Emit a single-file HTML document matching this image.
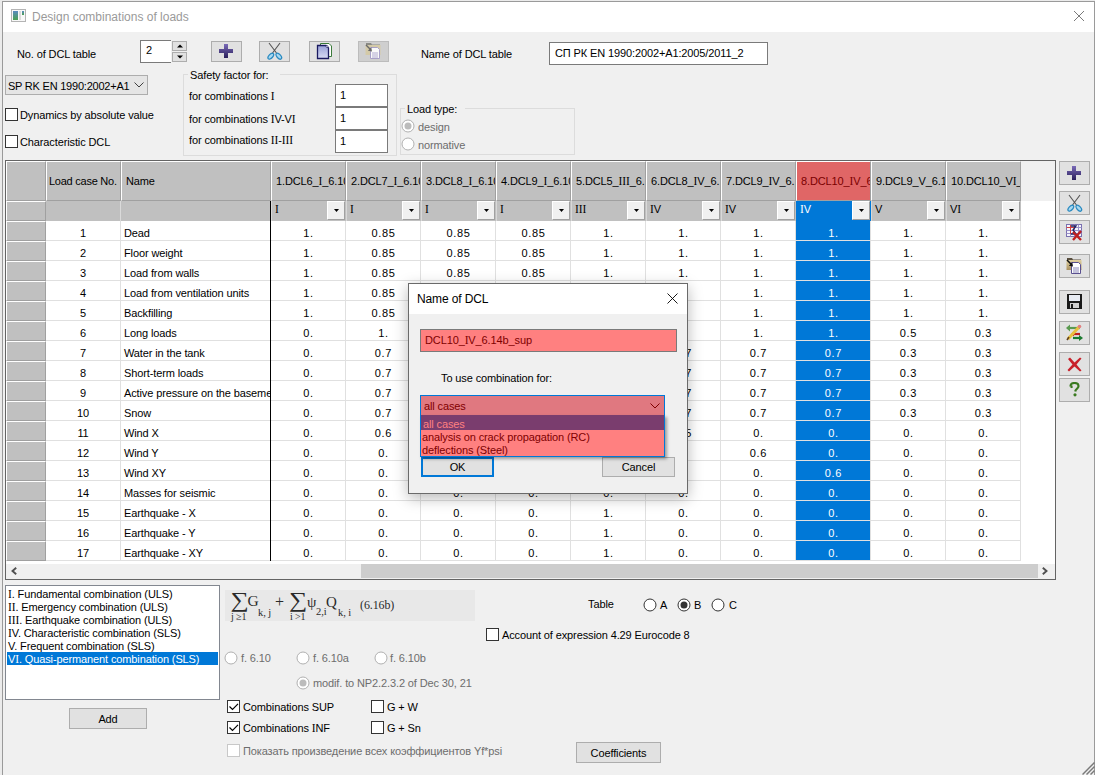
<!DOCTYPE html><html><head><meta charset="utf-8"><style>
*{box-sizing:border-box;margin:0;padding:0}
html,body{width:1095px;height:775px;overflow:hidden;background:#ebebeb;font-family:"Liberation Sans",sans-serif;font-size:11px;color:#000;letter-spacing:-0.12px}
div{position:absolute}
.t{white-space:nowrap}
svg{position:absolute}
</style></head><body>
<div style="left:2px;top:1px;width:1093px;height:774px;background:#f0f0f0;border-left:1px solid #9a9a9a;border-top:1px solid #9a9a9a;border-right:1px solid #9a9a9a"></div><div style="left:3px;top:2px;width:1091px;height:30px;background:#fff"></div><svg style="left:11px;top:9px" width="15" height="13" viewBox="0 0 15 13"><rect x="0.5" y="0.5" width="14" height="12" fill="#f8f8f8" stroke="#b4b4b4"/><defs><linearGradient id="gi" x1="0" y1="0" x2="0" y2="1"><stop offset="0" stop-color="#5a8ac0"/><stop offset="1" stop-color="#4aa050"/></linearGradient></defs><rect x="2" y="2" width="5" height="9" fill="url(#gi)"/><rect x="8" y="2" width="2" height="9" fill="#dcdcdc"/><rect x="11" y="2" width="2" height="4" fill="url(#gi)"/></svg><div class="t" style="left:32px;top:10px;height:14px;line-height:14px;font-size:12px;color:#9a9a9a;letter-spacing:0">Design combinations of loads</div><svg style="left:1073px;top:10px" width="12" height="12" viewBox="0 0 12 12"><path d="M1 1L11 11M11 1L1 11" stroke="#7a7a7a" stroke-width="1"/></svg><div class="t" style="left:17px;top:48px;height:13px;line-height:13px;">No. of DCL table</div><div style="left:140px;top:40px;width:31px;height:23px;background:#fff;border-left:1px solid #7a7a7a;border-top:1px solid #7a7a7a;border-bottom:1px solid #7a7a7a"></div><div class="t" style="left:146px;top:44px;height:13px;line-height:13px;">2</div><div style="left:172px;top:41px;width:15px;height:10px;background:#e1e1e1;border:1px solid #adadad"></div><div style="left:172px;top:52px;width:15px;height:10px;background:#e1e1e1;border:1px solid #adadad"></div><svg style="left:177px;top:44px" width="6" height="4"><path d="M0 3.5L3 0.5L6 3.5Z" fill="#000"/></svg><svg style="left:177px;top:55px" width="6" height="4"><path d="M0 0.5L3 3.5L6 0.5Z" fill="#000"/></svg><div style="left:211px;top:41px;width:31px;height:21px;background:#e1e1e1;border:1px solid #adadad"></div><svg style="left:218px;top:43px" width="16" height="16" viewBox="0 0 16 16"><defs><linearGradient id="pg21843" x1="0" y1="0" x2="0" y2="1"><stop offset="0" stop-color="#7a6ab8"/><stop offset="1" stop-color="#2a1f5a"/></linearGradient></defs><path d="M6 1H10V6H15V10H10V15H6V10H1V6H6Z" fill="url(#pg21843)"/></svg><div style="left:259px;top:41px;width:31px;height:21px;background:#e1e1e1;border:1px solid #adadad"></div><svg style="left:267px;top:42px" width="16" height="18" viewBox="0 0 16 18"><path d="M2 1L9.5 11M13 1L5.5 11" stroke="#555" stroke-width="1.1"/><g transform="rotate(-48 3.8 14.2)"><ellipse cx="3.8" cy="14.2" rx="3.6" ry="1.9" fill="#a8d8f0" stroke="#2a8ac0" stroke-width="1.3"/></g><g transform="rotate(48 11.8 14.2)"><ellipse cx="11.8" cy="14.2" rx="3.6" ry="1.9" fill="#a8d8f0" stroke="#2a8ac0" stroke-width="1.3"/></g></svg><div style="left:309px;top:41px;width:31px;height:21px;background:#e1e1e1;border:1px solid #adadad"></div><svg style="left:316px;top:42px" width="17" height="18" viewBox="0 0 17 18"><defs><linearGradient id="cpg" x1="0" y1="0" x2="0" y2="1"><stop offset="0" stop-color="#98a0d8"/><stop offset="1" stop-color="#d8dcf4"/></linearGradient></defs><path d="M4.5 1.5H13L15.5 4V14.5H4.5Z" fill="#fff" stroke="#3a7a3a"/><path d="M1.5 3.5H10L12.5 6V16.5H1.5Z" fill="url(#cpg)" stroke="#1a1a60" stroke-width="1.3"/><circle cx="11" cy="4.5" r="1" fill="#fff" stroke="#1a1a60" stroke-width="0.6"/></svg><div style="left:358px;top:41px;width:31px;height:21px;background:#cfcfcf;border:1px solid #bcbcbc"></div><svg style="left:365px;top:43px" width="17" height="17" viewBox="0 0 17 17"><path d="M1 0H6L7 1.5H15V2.5H1Z" fill="#8a8a84"/><path d="M0.5 2H15.5V12H0.5Z" fill="#d4caa8"/><path d="M5.5 4.5H12.5L14.5 6.5V15.5H5.5Z" fill="#fafafa" stroke="#a8a0c8"/><path d="M7 10H13M7 12H13M7 14H13" stroke="#b0aad0"/><path d="M1 2L5.5 6.5" stroke="#6a6a6a" stroke-width="1.4"/><path d="M7 8.5L2.8 7.8L6.3 4.3Z" fill="#6a6a6a"/></svg><div class="t" style="left:421px;top:48px;height:13px;line-height:13px;">Name of DCL table</div><div style="left:549px;top:42px;width:219px;height:23px;background:#fff;border:1px solid #7a7a7a"></div><div class="t" style="left:555px;top:47px;height:13px;line-height:13px;">СП РК EN 1990:2002+A1:2005/2011_2</div><div style="left:5px;top:75px;width:143px;height:20px;background:#e5e5e5;border:1px solid #adadad"></div><div class="t" style="left:8px;top:80px;height:13px;line-height:13px;letter-spacing:-0.22px">SP RK EN 1990:2002+A1</div><svg style="left:134px;top:82px" width="10" height="6"><path d="M0.5 0.5L5 5L9.5 0.5" fill="none" stroke="#404040"/></svg><div style="left:5px;top:108px;width:13px;height:13px;background:#fff;border:1px solid #333"></div><div class="t" style="left:20px;top:109px;height:13px;line-height:13px;">Dynamics by absolute value</div><div style="left:5px;top:135px;width:13px;height:13px;background:#fff;border:1px solid #333"></div><div class="t" style="left:20px;top:136px;height:13px;line-height:13px;">Characteristic DCL</div><div style="left:183px;top:74px;width:214px;height:82px;border:1px solid #dcdcdc"></div><div style="left:188px;top:68px;width:92px;height:13px;background:#f0f0f0"></div><div class="t" style="left:190px;top:69px;height:13px;line-height:13px;">Safety factor for:</div><div class="t" style="left:189px;top:90px;height:13px;line-height:13px;">for combinations <span style="font-family:'Liberation Serif';font-size:11.5px">I</span></div><div class="t" style="left:189px;top:113px;height:13px;line-height:13px;">for combinations <span style="font-family:'Liberation Serif';font-size:11.5px">I</span>V-V<span style="font-family:'Liberation Serif';font-size:11.5px">I</span></div><div class="t" style="left:189px;top:134px;height:13px;line-height:13px;">for combinations <span style="font-family:'Liberation Serif';font-size:11.5px">I</span><span style="font-family:'Liberation Serif';font-size:11.5px">I</span>-<span style="font-family:'Liberation Serif';font-size:11.5px">I</span><span style="font-family:'Liberation Serif';font-size:11.5px">I</span><span style="font-family:'Liberation Serif';font-size:11.5px">I</span></div><div style="left:335px;top:84px;width:53px;height:23px;background:#fff;border:1px solid #7a7a7a"></div><div class="t" style="left:340px;top:89px;height:13px;line-height:13px;">1</div><div style="left:335px;top:107px;width:53px;height:23px;background:#fff;border:1px solid #7a7a7a"></div><div class="t" style="left:340px;top:112px;height:13px;line-height:13px;">1</div><div style="left:335px;top:130px;width:53px;height:23px;background:#fff;border:1px solid #7a7a7a"></div><div class="t" style="left:340px;top:135px;height:13px;line-height:13px;">1</div><div style="left:400px;top:108px;width:175px;height:47px;border:1px solid #dcdcdc"></div><div style="left:405px;top:101px;width:60px;height:13px;background:#f0f0f0"></div><div class="t" style="left:407px;top:103px;height:13px;line-height:13px;">Load type:</div><svg style="left:401px;top:119px" width="15" height="15"><circle cx="7" cy="7" r="6" fill="#fff" stroke="#b0b0b0"/><circle cx="7" cy="7" r="3.5" fill="#bcbcbc"/></svg><div class="t" style="left:418px;top:121px;height:13px;line-height:13px;color:#6d6d6d">design</div><svg style="left:401px;top:137px" width="15" height="15"><circle cx="7" cy="7" r="6" fill="#fff" stroke="#b0b0b0"/></svg><div class="t" style="left:418px;top:139px;height:13px;line-height:13px;color:#6d6d6d">normative</div><div style="left:5px;top:160px;width:1051px;height:420px;background:#fff;border:1px solid #646464"></div><div style="left:6px;top:161px;width:1049px;height:40px;background:#f0f0f0"></div><div style="left:6px;top:161px;width:40px;height:40px;background:#c0c0c0;border-top:1px solid #fff;border-left:1px solid #fff;border-bottom:1px solid #a0a0a0;border-right:1px solid #a0a0a0;overflow:hidden"></div><div style="left:46px;top:161px;width:75px;height:40px;background:#c0c0c0;border-top:1px solid #fff;border-left:1px solid #fff;border-bottom:1px solid #a0a0a0;border-right:1px solid #a0a0a0;overflow:hidden"><div class="t" style="left:4px;top:13px;line-height:13px;letter-spacing:-0.25px;left:2px">Load case No.</div></div><div style="left:121px;top:161px;width:150px;height:40px;background:#c0c0c0;border-top:1px solid #fff;border-left:1px solid #fff;border-bottom:1px solid #a0a0a0;border-right:1px solid #a0a0a0;overflow:hidden"><div class="t" style="left:4px;top:13px;line-height:13px;">Name</div></div><div style="left:271px;top:161px;width:75px;height:40px;background:#c0c0c0;border-top:1px solid #fff;border-left:1px solid #fff;border-bottom:1px solid #a0a0a0;border-right:1px solid #a0a0a0;overflow:hidden"><div class="t" style="left:4px;top:13px;line-height:13px;">1.DCL6_<span style="font-family:'Liberation Serif';font-size:11.5px">I</span>_6.10</div></div><div style="left:346px;top:161px;width:75px;height:40px;background:#c0c0c0;border-top:1px solid #fff;border-left:1px solid #fff;border-bottom:1px solid #a0a0a0;border-right:1px solid #a0a0a0;overflow:hidden"><div class="t" style="left:4px;top:13px;line-height:13px;">2.DCL7_<span style="font-family:'Liberation Serif';font-size:11.5px">I</span>_6.10</div></div><div style="left:421px;top:161px;width:75px;height:40px;background:#c0c0c0;border-top:1px solid #fff;border-left:1px solid #fff;border-bottom:1px solid #a0a0a0;border-right:1px solid #a0a0a0;overflow:hidden"><div class="t" style="left:4px;top:13px;line-height:13px;">3.DCL8_<span style="font-family:'Liberation Serif';font-size:11.5px">I</span>_6.10</div></div><div style="left:496px;top:161px;width:75px;height:40px;background:#c0c0c0;border-top:1px solid #fff;border-left:1px solid #fff;border-bottom:1px solid #a0a0a0;border-right:1px solid #a0a0a0;overflow:hidden"><div class="t" style="left:4px;top:13px;line-height:13px;">4.DCL9_<span style="font-family:'Liberation Serif';font-size:11.5px">I</span>_6.10</div></div><div style="left:571px;top:161px;width:75px;height:40px;background:#c0c0c0;border-top:1px solid #fff;border-left:1px solid #fff;border-bottom:1px solid #a0a0a0;border-right:1px solid #a0a0a0;overflow:hidden"><div class="t" style="left:4px;top:13px;line-height:13px;">5.DCL5_<span style="font-family:'Liberation Serif';font-size:11.5px">I</span><span style="font-family:'Liberation Serif';font-size:11.5px">I</span><span style="font-family:'Liberation Serif';font-size:11.5px">I</span>_6.10</div></div><div style="left:646px;top:161px;width:75px;height:40px;background:#c0c0c0;border-top:1px solid #fff;border-left:1px solid #fff;border-bottom:1px solid #a0a0a0;border-right:1px solid #a0a0a0;overflow:hidden"><div class="t" style="left:4px;top:13px;line-height:13px;">6.DCL8_<span style="font-family:'Liberation Serif';font-size:11.5px">I</span>V_6.10</div></div><div style="left:721px;top:161px;width:75px;height:40px;background:#c0c0c0;border-top:1px solid #fff;border-left:1px solid #fff;border-bottom:1px solid #a0a0a0;border-right:1px solid #a0a0a0;overflow:hidden"><div class="t" style="left:4px;top:13px;line-height:13px;">7.DCL9_<span style="font-family:'Liberation Serif';font-size:11.5px">I</span>V_6.10</div></div><div style="left:796px;top:161px;width:75px;height:40px;background:#e06666;border-top:1px solid #fff;border-left:1px solid #fff;border-bottom:1px solid #a0a0a0;border-right:1px solid #a0a0a0;overflow:hidden"><div class="t" style="left:4px;top:13px;line-height:13px;color:#7a0000">8.DCL10_<span style="font-family:'Liberation Serif';font-size:11.5px">I</span>V_6.10</div></div><div style="left:871px;top:161px;width:75px;height:40px;background:#c0c0c0;border-top:1px solid #fff;border-left:1px solid #fff;border-bottom:1px solid #a0a0a0;border-right:1px solid #a0a0a0;overflow:hidden"><div class="t" style="left:4px;top:13px;line-height:13px;">9.DCL9_V_6.10</div></div><div style="left:946px;top:161px;width:75px;height:40px;background:#c0c0c0;border-top:1px solid #fff;border-left:1px solid #fff;border-bottom:1px solid #a0a0a0;border-right:1px solid #a0a0a0;overflow:hidden"><div class="t" style="left:4px;top:13px;line-height:13px;">10.DCL10_V<span style="font-family:'Liberation Serif';font-size:11.5px">I</span>_6.10</div></div><div style="left:6px;top:201px;width:1049px;height:20px;background:#fff"></div><div style="left:6px;top:201px;width:40px;height:20px;background:#c0c0c0;border-top:1px solid #fff;border-left:1px solid #fff;border-bottom:1px solid #a0a0a0;border-right:1px solid #a0a0a0;overflow:hidden"></div><div style="left:46px;top:201px;width:225px;height:20px;background:#c0c0c0"></div><div style="left:120px;top:201px;width:1px;height:20px;background:#dadada"></div><div style="left:271px;top:201px;width:75px;height:20px;background:#c0c0c0;border-left:1px solid #d8d8d8"></div><div class="t" style="left:275px;top:203px;height:13px;line-height:13px;color:#000"><span style="font-family:'Liberation Serif';font-size:11.5px">I</span></div><div style="left:327px;top:201px;width:18px;height:19px;background:#f0f0f0;border-left:1px solid #fff;border-top:1px solid #fff;border-right:1px solid #a0a0a0;border-bottom:1px solid #a0a0a0"></div><svg style="left:334px;top:209px" width="5" height="3"><path d="M0 0H5L2.5 3Z" fill="#000"/></svg><div style="left:346px;top:201px;width:75px;height:20px;background:#c0c0c0;border-left:1px solid #d8d8d8"></div><div class="t" style="left:350px;top:203px;height:13px;line-height:13px;color:#000"><span style="font-family:'Liberation Serif';font-size:11.5px">I</span></div><div style="left:402px;top:201px;width:18px;height:19px;background:#f0f0f0;border-left:1px solid #fff;border-top:1px solid #fff;border-right:1px solid #a0a0a0;border-bottom:1px solid #a0a0a0"></div><svg style="left:409px;top:209px" width="5" height="3"><path d="M0 0H5L2.5 3Z" fill="#000"/></svg><div style="left:421px;top:201px;width:75px;height:20px;background:#c0c0c0;border-left:1px solid #d8d8d8"></div><div class="t" style="left:425px;top:203px;height:13px;line-height:13px;color:#000"><span style="font-family:'Liberation Serif';font-size:11.5px">I</span></div><div style="left:477px;top:201px;width:18px;height:19px;background:#f0f0f0;border-left:1px solid #fff;border-top:1px solid #fff;border-right:1px solid #a0a0a0;border-bottom:1px solid #a0a0a0"></div><svg style="left:484px;top:209px" width="5" height="3"><path d="M0 0H5L2.5 3Z" fill="#000"/></svg><div style="left:496px;top:201px;width:75px;height:20px;background:#c0c0c0;border-left:1px solid #d8d8d8"></div><div class="t" style="left:500px;top:203px;height:13px;line-height:13px;color:#000"><span style="font-family:'Liberation Serif';font-size:11.5px">I</span></div><div style="left:552px;top:201px;width:18px;height:19px;background:#f0f0f0;border-left:1px solid #fff;border-top:1px solid #fff;border-right:1px solid #a0a0a0;border-bottom:1px solid #a0a0a0"></div><svg style="left:559px;top:209px" width="5" height="3"><path d="M0 0H5L2.5 3Z" fill="#000"/></svg><div style="left:571px;top:201px;width:75px;height:20px;background:#c0c0c0;border-left:1px solid #d8d8d8"></div><div class="t" style="left:575px;top:203px;height:13px;line-height:13px;color:#000"><span style="font-family:'Liberation Serif';font-size:11.5px">I</span><span style="font-family:'Liberation Serif';font-size:11.5px">I</span><span style="font-family:'Liberation Serif';font-size:11.5px">I</span></div><div style="left:627px;top:201px;width:18px;height:19px;background:#f0f0f0;border-left:1px solid #fff;border-top:1px solid #fff;border-right:1px solid #a0a0a0;border-bottom:1px solid #a0a0a0"></div><svg style="left:634px;top:209px" width="5" height="3"><path d="M0 0H5L2.5 3Z" fill="#000"/></svg><div style="left:646px;top:201px;width:75px;height:20px;background:#c0c0c0;border-left:1px solid #d8d8d8"></div><div class="t" style="left:650px;top:203px;height:13px;line-height:13px;color:#000"><span style="font-family:'Liberation Serif';font-size:11.5px">I</span>V</div><div style="left:702px;top:201px;width:18px;height:19px;background:#f0f0f0;border-left:1px solid #fff;border-top:1px solid #fff;border-right:1px solid #a0a0a0;border-bottom:1px solid #a0a0a0"></div><svg style="left:709px;top:209px" width="5" height="3"><path d="M0 0H5L2.5 3Z" fill="#000"/></svg><div style="left:721px;top:201px;width:75px;height:20px;background:#c0c0c0;border-left:1px solid #d8d8d8"></div><div class="t" style="left:725px;top:203px;height:13px;line-height:13px;color:#000"><span style="font-family:'Liberation Serif';font-size:11.5px">I</span>V</div><div style="left:777px;top:201px;width:18px;height:19px;background:#f0f0f0;border-left:1px solid #fff;border-top:1px solid #fff;border-right:1px solid #a0a0a0;border-bottom:1px solid #a0a0a0"></div><svg style="left:784px;top:209px" width="5" height="3"><path d="M0 0H5L2.5 3Z" fill="#000"/></svg><div style="left:796px;top:201px;width:75px;height:20px;background:#0078d7;border-left:1px solid #0078d7"></div><div class="t" style="left:800px;top:203px;height:13px;line-height:13px;color:#fff"><span style="font-family:'Liberation Serif';font-size:11.5px">I</span>V</div><div style="left:852px;top:201px;width:18px;height:19px;background:#f0f0f0;border-left:1px solid #fff;border-top:1px solid #fff;border-right:1px solid #a0a0a0;border-bottom:1px solid #a0a0a0"></div><svg style="left:859px;top:209px" width="5" height="3"><path d="M0 0H5L2.5 3Z" fill="#000"/></svg><div style="left:871px;top:201px;width:75px;height:20px;background:#c0c0c0;border-left:1px solid #d8d8d8"></div><div class="t" style="left:875px;top:203px;height:13px;line-height:13px;color:#000">V</div><div style="left:927px;top:201px;width:18px;height:19px;background:#f0f0f0;border-left:1px solid #fff;border-top:1px solid #fff;border-right:1px solid #a0a0a0;border-bottom:1px solid #a0a0a0"></div><svg style="left:934px;top:209px" width="5" height="3"><path d="M0 0H5L2.5 3Z" fill="#000"/></svg><div style="left:946px;top:201px;width:75px;height:20px;background:#c0c0c0;border-left:1px solid #d8d8d8"></div><div class="t" style="left:950px;top:203px;height:13px;line-height:13px;color:#000">V<span style="font-family:'Liberation Serif';font-size:11.5px">I</span></div><div style="left:1002px;top:201px;width:18px;height:19px;background:#f0f0f0;border-left:1px solid #fff;border-top:1px solid #fff;border-right:1px solid #a0a0a0;border-bottom:1px solid #a0a0a0"></div><svg style="left:1009px;top:209px" width="5" height="3"><path d="M0 0H5L2.5 3Z" fill="#000"/></svg><div style="left:6px;top:221px;width:40px;height:20px;background:#c0c0c0;border-top:1px solid #fff;border-left:1px solid #fff;border-bottom:1px solid #a0a0a0;border-right:1px solid #a0a0a0;overflow:hidden"></div><div style="left:46px;top:221px;width:75px;height:20px;border-bottom:1px solid #e0e0e0;border-right:1px solid #e0e0e0"></div><div class="t" style="left:46px;top:227px;width:74px;text-align:center;line-height:13px">1</div><div style="left:121px;top:221px;width:150px;height:20px;border-bottom:1px solid #e0e0e0;overflow:hidden"><div class="t" style="left:3px;top:6px;line-height:13px">Dead</div></div><div style="left:271px;top:221px;width:75px;height:20px;border-bottom:1px solid #e0e0e0;border-right:1px solid #e0e0e0"></div><div class="t" style="left:271px;top:227px;width:74px;text-align:center;line-height:13px;letter-spacing:0.7px;padding-left:1px;color:#000">1.</div><div style="left:346px;top:221px;width:75px;height:20px;border-bottom:1px solid #e0e0e0;border-right:1px solid #e0e0e0"></div><div class="t" style="left:346px;top:227px;width:74px;text-align:center;line-height:13px;letter-spacing:0.7px;padding-left:1px;color:#000">0.85</div><div style="left:421px;top:221px;width:75px;height:20px;border-bottom:1px solid #e0e0e0;border-right:1px solid #e0e0e0"></div><div class="t" style="left:421px;top:227px;width:74px;text-align:center;line-height:13px;letter-spacing:0.7px;padding-left:1px;color:#000">0.85</div><div style="left:496px;top:221px;width:75px;height:20px;border-bottom:1px solid #e0e0e0;border-right:1px solid #e0e0e0"></div><div class="t" style="left:496px;top:227px;width:74px;text-align:center;line-height:13px;letter-spacing:0.7px;padding-left:1px;color:#000">0.85</div><div style="left:571px;top:221px;width:75px;height:20px;border-bottom:1px solid #e0e0e0;border-right:1px solid #e0e0e0"></div><div class="t" style="left:571px;top:227px;width:74px;text-align:center;line-height:13px;letter-spacing:0.7px;padding-left:1px;color:#000">1.</div><div style="left:646px;top:221px;width:75px;height:20px;border-bottom:1px solid #e0e0e0;border-right:1px solid #e0e0e0"></div><div class="t" style="left:646px;top:227px;width:74px;text-align:center;line-height:13px;letter-spacing:0.7px;padding-left:1px;color:#000">1.</div><div style="left:721px;top:221px;width:75px;height:20px;border-bottom:1px solid #e0e0e0;border-right:1px solid #e0e0e0"></div><div class="t" style="left:721px;top:227px;width:74px;text-align:center;line-height:13px;letter-spacing:0.7px;padding-left:1px;color:#000">1.</div><div style="left:796px;top:221px;width:75px;height:20px;background:#0078d7;border-bottom:1px solid #e0e0e0;border-right:1px solid #e0e0e0"></div><div class="t" style="left:796px;top:227px;width:74px;text-align:center;line-height:13px;letter-spacing:0.7px;padding-left:1px;color:#fff">1.</div><div style="left:871px;top:221px;width:75px;height:20px;border-bottom:1px solid #e0e0e0;border-right:1px solid #e0e0e0"></div><div class="t" style="left:871px;top:227px;width:74px;text-align:center;line-height:13px;letter-spacing:0.7px;padding-left:1px;color:#000">1.</div><div style="left:946px;top:221px;width:75px;height:20px;border-bottom:1px solid #e0e0e0;border-right:1px solid #e0e0e0"></div><div class="t" style="left:946px;top:227px;width:74px;text-align:center;line-height:13px;letter-spacing:0.7px;padding-left:1px;color:#000">1.</div><div style="left:6px;top:241px;width:40px;height:20px;background:#c0c0c0;border-top:1px solid #fff;border-left:1px solid #fff;border-bottom:1px solid #a0a0a0;border-right:1px solid #a0a0a0;overflow:hidden"></div><div style="left:46px;top:241px;width:75px;height:20px;border-bottom:1px solid #e0e0e0;border-right:1px solid #e0e0e0"></div><div class="t" style="left:46px;top:247px;width:74px;text-align:center;line-height:13px">2</div><div style="left:121px;top:241px;width:150px;height:20px;border-bottom:1px solid #e0e0e0;overflow:hidden"><div class="t" style="left:3px;top:6px;line-height:13px">Floor weight</div></div><div style="left:271px;top:241px;width:75px;height:20px;border-bottom:1px solid #e0e0e0;border-right:1px solid #e0e0e0"></div><div class="t" style="left:271px;top:247px;width:74px;text-align:center;line-height:13px;letter-spacing:0.7px;padding-left:1px;color:#000">1.</div><div style="left:346px;top:241px;width:75px;height:20px;border-bottom:1px solid #e0e0e0;border-right:1px solid #e0e0e0"></div><div class="t" style="left:346px;top:247px;width:74px;text-align:center;line-height:13px;letter-spacing:0.7px;padding-left:1px;color:#000">0.85</div><div style="left:421px;top:241px;width:75px;height:20px;border-bottom:1px solid #e0e0e0;border-right:1px solid #e0e0e0"></div><div class="t" style="left:421px;top:247px;width:74px;text-align:center;line-height:13px;letter-spacing:0.7px;padding-left:1px;color:#000">0.85</div><div style="left:496px;top:241px;width:75px;height:20px;border-bottom:1px solid #e0e0e0;border-right:1px solid #e0e0e0"></div><div class="t" style="left:496px;top:247px;width:74px;text-align:center;line-height:13px;letter-spacing:0.7px;padding-left:1px;color:#000">0.85</div><div style="left:571px;top:241px;width:75px;height:20px;border-bottom:1px solid #e0e0e0;border-right:1px solid #e0e0e0"></div><div class="t" style="left:571px;top:247px;width:74px;text-align:center;line-height:13px;letter-spacing:0.7px;padding-left:1px;color:#000">1.</div><div style="left:646px;top:241px;width:75px;height:20px;border-bottom:1px solid #e0e0e0;border-right:1px solid #e0e0e0"></div><div class="t" style="left:646px;top:247px;width:74px;text-align:center;line-height:13px;letter-spacing:0.7px;padding-left:1px;color:#000">1.</div><div style="left:721px;top:241px;width:75px;height:20px;border-bottom:1px solid #e0e0e0;border-right:1px solid #e0e0e0"></div><div class="t" style="left:721px;top:247px;width:74px;text-align:center;line-height:13px;letter-spacing:0.7px;padding-left:1px;color:#000">1.</div><div style="left:796px;top:241px;width:75px;height:20px;background:#0078d7;border-bottom:1px solid #e0e0e0;border-right:1px solid #e0e0e0"></div><div class="t" style="left:796px;top:247px;width:74px;text-align:center;line-height:13px;letter-spacing:0.7px;padding-left:1px;color:#fff">1.</div><div style="left:871px;top:241px;width:75px;height:20px;border-bottom:1px solid #e0e0e0;border-right:1px solid #e0e0e0"></div><div class="t" style="left:871px;top:247px;width:74px;text-align:center;line-height:13px;letter-spacing:0.7px;padding-left:1px;color:#000">1.</div><div style="left:946px;top:241px;width:75px;height:20px;border-bottom:1px solid #e0e0e0;border-right:1px solid #e0e0e0"></div><div class="t" style="left:946px;top:247px;width:74px;text-align:center;line-height:13px;letter-spacing:0.7px;padding-left:1px;color:#000">1.</div><div style="left:6px;top:261px;width:40px;height:20px;background:#c0c0c0;border-top:1px solid #fff;border-left:1px solid #fff;border-bottom:1px solid #a0a0a0;border-right:1px solid #a0a0a0;overflow:hidden"></div><div style="left:46px;top:261px;width:75px;height:20px;border-bottom:1px solid #e0e0e0;border-right:1px solid #e0e0e0"></div><div class="t" style="left:46px;top:267px;width:74px;text-align:center;line-height:13px">3</div><div style="left:121px;top:261px;width:150px;height:20px;border-bottom:1px solid #e0e0e0;overflow:hidden"><div class="t" style="left:3px;top:6px;line-height:13px">Load from walls</div></div><div style="left:271px;top:261px;width:75px;height:20px;border-bottom:1px solid #e0e0e0;border-right:1px solid #e0e0e0"></div><div class="t" style="left:271px;top:267px;width:74px;text-align:center;line-height:13px;letter-spacing:0.7px;padding-left:1px;color:#000">1.</div><div style="left:346px;top:261px;width:75px;height:20px;border-bottom:1px solid #e0e0e0;border-right:1px solid #e0e0e0"></div><div class="t" style="left:346px;top:267px;width:74px;text-align:center;line-height:13px;letter-spacing:0.7px;padding-left:1px;color:#000">0.85</div><div style="left:421px;top:261px;width:75px;height:20px;border-bottom:1px solid #e0e0e0;border-right:1px solid #e0e0e0"></div><div class="t" style="left:421px;top:267px;width:74px;text-align:center;line-height:13px;letter-spacing:0.7px;padding-left:1px;color:#000">0.85</div><div style="left:496px;top:261px;width:75px;height:20px;border-bottom:1px solid #e0e0e0;border-right:1px solid #e0e0e0"></div><div class="t" style="left:496px;top:267px;width:74px;text-align:center;line-height:13px;letter-spacing:0.7px;padding-left:1px;color:#000">0.85</div><div style="left:571px;top:261px;width:75px;height:20px;border-bottom:1px solid #e0e0e0;border-right:1px solid #e0e0e0"></div><div class="t" style="left:571px;top:267px;width:74px;text-align:center;line-height:13px;letter-spacing:0.7px;padding-left:1px;color:#000">1.</div><div style="left:646px;top:261px;width:75px;height:20px;border-bottom:1px solid #e0e0e0;border-right:1px solid #e0e0e0"></div><div class="t" style="left:646px;top:267px;width:74px;text-align:center;line-height:13px;letter-spacing:0.7px;padding-left:1px;color:#000">1.</div><div style="left:721px;top:261px;width:75px;height:20px;border-bottom:1px solid #e0e0e0;border-right:1px solid #e0e0e0"></div><div class="t" style="left:721px;top:267px;width:74px;text-align:center;line-height:13px;letter-spacing:0.7px;padding-left:1px;color:#000">1.</div><div style="left:796px;top:261px;width:75px;height:20px;background:#0078d7;border-bottom:1px solid #e0e0e0;border-right:1px solid #e0e0e0"></div><div class="t" style="left:796px;top:267px;width:74px;text-align:center;line-height:13px;letter-spacing:0.7px;padding-left:1px;color:#fff">1.</div><div style="left:871px;top:261px;width:75px;height:20px;border-bottom:1px solid #e0e0e0;border-right:1px solid #e0e0e0"></div><div class="t" style="left:871px;top:267px;width:74px;text-align:center;line-height:13px;letter-spacing:0.7px;padding-left:1px;color:#000">1.</div><div style="left:946px;top:261px;width:75px;height:20px;border-bottom:1px solid #e0e0e0;border-right:1px solid #e0e0e0"></div><div class="t" style="left:946px;top:267px;width:74px;text-align:center;line-height:13px;letter-spacing:0.7px;padding-left:1px;color:#000">1.</div><div style="left:6px;top:281px;width:40px;height:20px;background:#c0c0c0;border-top:1px solid #fff;border-left:1px solid #fff;border-bottom:1px solid #a0a0a0;border-right:1px solid #a0a0a0;overflow:hidden"></div><div style="left:46px;top:281px;width:75px;height:20px;border-bottom:1px solid #e0e0e0;border-right:1px solid #e0e0e0"></div><div class="t" style="left:46px;top:287px;width:74px;text-align:center;line-height:13px">4</div><div style="left:121px;top:281px;width:150px;height:20px;border-bottom:1px solid #e0e0e0;overflow:hidden"><div class="t" style="left:3px;top:6px;line-height:13px">Load from ventilation units</div></div><div style="left:271px;top:281px;width:75px;height:20px;border-bottom:1px solid #e0e0e0;border-right:1px solid #e0e0e0"></div><div class="t" style="left:271px;top:287px;width:74px;text-align:center;line-height:13px;letter-spacing:0.7px;padding-left:1px;color:#000">1.</div><div style="left:346px;top:281px;width:75px;height:20px;border-bottom:1px solid #e0e0e0;border-right:1px solid #e0e0e0"></div><div class="t" style="left:346px;top:287px;width:74px;text-align:center;line-height:13px;letter-spacing:0.7px;padding-left:1px;color:#000">0.85</div><div style="left:421px;top:281px;width:75px;height:20px;border-bottom:1px solid #e0e0e0;border-right:1px solid #e0e0e0"></div><div class="t" style="left:421px;top:287px;width:74px;text-align:center;line-height:13px;letter-spacing:0.7px;padding-left:1px;color:#000">0.85</div><div style="left:496px;top:281px;width:75px;height:20px;border-bottom:1px solid #e0e0e0;border-right:1px solid #e0e0e0"></div><div class="t" style="left:496px;top:287px;width:74px;text-align:center;line-height:13px;letter-spacing:0.7px;padding-left:1px;color:#000">0.85</div><div style="left:571px;top:281px;width:75px;height:20px;border-bottom:1px solid #e0e0e0;border-right:1px solid #e0e0e0"></div><div class="t" style="left:571px;top:287px;width:74px;text-align:center;line-height:13px;letter-spacing:0.7px;padding-left:1px;color:#000">1.</div><div style="left:646px;top:281px;width:75px;height:20px;border-bottom:1px solid #e0e0e0;border-right:1px solid #e0e0e0"></div><div class="t" style="left:646px;top:287px;width:74px;text-align:center;line-height:13px;letter-spacing:0.7px;padding-left:1px;color:#000">1.</div><div style="left:721px;top:281px;width:75px;height:20px;border-bottom:1px solid #e0e0e0;border-right:1px solid #e0e0e0"></div><div class="t" style="left:721px;top:287px;width:74px;text-align:center;line-height:13px;letter-spacing:0.7px;padding-left:1px;color:#000">1.</div><div style="left:796px;top:281px;width:75px;height:20px;background:#0078d7;border-bottom:1px solid #e0e0e0;border-right:1px solid #e0e0e0"></div><div class="t" style="left:796px;top:287px;width:74px;text-align:center;line-height:13px;letter-spacing:0.7px;padding-left:1px;color:#fff">1.</div><div style="left:871px;top:281px;width:75px;height:20px;border-bottom:1px solid #e0e0e0;border-right:1px solid #e0e0e0"></div><div class="t" style="left:871px;top:287px;width:74px;text-align:center;line-height:13px;letter-spacing:0.7px;padding-left:1px;color:#000">1.</div><div style="left:946px;top:281px;width:75px;height:20px;border-bottom:1px solid #e0e0e0;border-right:1px solid #e0e0e0"></div><div class="t" style="left:946px;top:287px;width:74px;text-align:center;line-height:13px;letter-spacing:0.7px;padding-left:1px;color:#000">1.</div><div style="left:6px;top:301px;width:40px;height:20px;background:#c0c0c0;border-top:1px solid #fff;border-left:1px solid #fff;border-bottom:1px solid #a0a0a0;border-right:1px solid #a0a0a0;overflow:hidden"></div><div style="left:46px;top:301px;width:75px;height:20px;border-bottom:1px solid #e0e0e0;border-right:1px solid #e0e0e0"></div><div class="t" style="left:46px;top:307px;width:74px;text-align:center;line-height:13px">5</div><div style="left:121px;top:301px;width:150px;height:20px;border-bottom:1px solid #e0e0e0;overflow:hidden"><div class="t" style="left:3px;top:6px;line-height:13px">Backfilling</div></div><div style="left:271px;top:301px;width:75px;height:20px;border-bottom:1px solid #e0e0e0;border-right:1px solid #e0e0e0"></div><div class="t" style="left:271px;top:307px;width:74px;text-align:center;line-height:13px;letter-spacing:0.7px;padding-left:1px;color:#000">1.</div><div style="left:346px;top:301px;width:75px;height:20px;border-bottom:1px solid #e0e0e0;border-right:1px solid #e0e0e0"></div><div class="t" style="left:346px;top:307px;width:74px;text-align:center;line-height:13px;letter-spacing:0.7px;padding-left:1px;color:#000">0.85</div><div style="left:421px;top:301px;width:75px;height:20px;border-bottom:1px solid #e0e0e0;border-right:1px solid #e0e0e0"></div><div class="t" style="left:421px;top:307px;width:74px;text-align:center;line-height:13px;letter-spacing:0.7px;padding-left:1px;color:#000">0.85</div><div style="left:496px;top:301px;width:75px;height:20px;border-bottom:1px solid #e0e0e0;border-right:1px solid #e0e0e0"></div><div class="t" style="left:496px;top:307px;width:74px;text-align:center;line-height:13px;letter-spacing:0.7px;padding-left:1px;color:#000">0.85</div><div style="left:571px;top:301px;width:75px;height:20px;border-bottom:1px solid #e0e0e0;border-right:1px solid #e0e0e0"></div><div class="t" style="left:571px;top:307px;width:74px;text-align:center;line-height:13px;letter-spacing:0.7px;padding-left:1px;color:#000">1.</div><div style="left:646px;top:301px;width:75px;height:20px;border-bottom:1px solid #e0e0e0;border-right:1px solid #e0e0e0"></div><div class="t" style="left:646px;top:307px;width:74px;text-align:center;line-height:13px;letter-spacing:0.7px;padding-left:1px;color:#000">1.</div><div style="left:721px;top:301px;width:75px;height:20px;border-bottom:1px solid #e0e0e0;border-right:1px solid #e0e0e0"></div><div class="t" style="left:721px;top:307px;width:74px;text-align:center;line-height:13px;letter-spacing:0.7px;padding-left:1px;color:#000">1.</div><div style="left:796px;top:301px;width:75px;height:20px;background:#0078d7;border-bottom:1px solid #e0e0e0;border-right:1px solid #e0e0e0"></div><div class="t" style="left:796px;top:307px;width:74px;text-align:center;line-height:13px;letter-spacing:0.7px;padding-left:1px;color:#fff">1.</div><div style="left:871px;top:301px;width:75px;height:20px;border-bottom:1px solid #e0e0e0;border-right:1px solid #e0e0e0"></div><div class="t" style="left:871px;top:307px;width:74px;text-align:center;line-height:13px;letter-spacing:0.7px;padding-left:1px;color:#000">1.</div><div style="left:946px;top:301px;width:75px;height:20px;border-bottom:1px solid #e0e0e0;border-right:1px solid #e0e0e0"></div><div class="t" style="left:946px;top:307px;width:74px;text-align:center;line-height:13px;letter-spacing:0.7px;padding-left:1px;color:#000">1.</div><div style="left:6px;top:321px;width:40px;height:20px;background:#c0c0c0;border-top:1px solid #fff;border-left:1px solid #fff;border-bottom:1px solid #a0a0a0;border-right:1px solid #a0a0a0;overflow:hidden"></div><div style="left:46px;top:321px;width:75px;height:20px;border-bottom:1px solid #e0e0e0;border-right:1px solid #e0e0e0"></div><div class="t" style="left:46px;top:327px;width:74px;text-align:center;line-height:13px">6</div><div style="left:121px;top:321px;width:150px;height:20px;border-bottom:1px solid #e0e0e0;overflow:hidden"><div class="t" style="left:3px;top:6px;line-height:13px">Long loads</div></div><div style="left:271px;top:321px;width:75px;height:20px;border-bottom:1px solid #e0e0e0;border-right:1px solid #e0e0e0"></div><div class="t" style="left:271px;top:327px;width:74px;text-align:center;line-height:13px;letter-spacing:0.7px;padding-left:1px;color:#000">0.</div><div style="left:346px;top:321px;width:75px;height:20px;border-bottom:1px solid #e0e0e0;border-right:1px solid #e0e0e0"></div><div class="t" style="left:346px;top:327px;width:74px;text-align:center;line-height:13px;letter-spacing:0.7px;padding-left:1px;color:#000">1.</div><div style="left:421px;top:321px;width:75px;height:20px;border-bottom:1px solid #e0e0e0;border-right:1px solid #e0e0e0"></div><div class="t" style="left:421px;top:327px;width:74px;text-align:center;line-height:13px;letter-spacing:0.7px;padding-left:1px;color:#000">1.</div><div style="left:496px;top:321px;width:75px;height:20px;border-bottom:1px solid #e0e0e0;border-right:1px solid #e0e0e0"></div><div class="t" style="left:496px;top:327px;width:74px;text-align:center;line-height:13px;letter-spacing:0.7px;padding-left:1px;color:#000">1.</div><div style="left:571px;top:321px;width:75px;height:20px;border-bottom:1px solid #e0e0e0;border-right:1px solid #e0e0e0"></div><div class="t" style="left:571px;top:327px;width:74px;text-align:center;line-height:13px;letter-spacing:0.7px;padding-left:1px;color:#000">0.</div><div style="left:646px;top:321px;width:75px;height:20px;border-bottom:1px solid #e0e0e0;border-right:1px solid #e0e0e0"></div><div class="t" style="left:646px;top:327px;width:74px;text-align:center;line-height:13px;letter-spacing:0.7px;padding-left:1px;color:#000">1.</div><div style="left:721px;top:321px;width:75px;height:20px;border-bottom:1px solid #e0e0e0;border-right:1px solid #e0e0e0"></div><div class="t" style="left:721px;top:327px;width:74px;text-align:center;line-height:13px;letter-spacing:0.7px;padding-left:1px;color:#000">1.</div><div style="left:796px;top:321px;width:75px;height:20px;background:#0078d7;border-bottom:1px solid #e0e0e0;border-right:1px solid #e0e0e0"></div><div class="t" style="left:796px;top:327px;width:74px;text-align:center;line-height:13px;letter-spacing:0.7px;padding-left:1px;color:#fff">1.</div><div style="left:871px;top:321px;width:75px;height:20px;border-bottom:1px solid #e0e0e0;border-right:1px solid #e0e0e0"></div><div class="t" style="left:871px;top:327px;width:74px;text-align:center;line-height:13px;letter-spacing:0.7px;padding-left:1px;color:#000">0.5</div><div style="left:946px;top:321px;width:75px;height:20px;border-bottom:1px solid #e0e0e0;border-right:1px solid #e0e0e0"></div><div class="t" style="left:946px;top:327px;width:74px;text-align:center;line-height:13px;letter-spacing:0.7px;padding-left:1px;color:#000">0.3</div><div style="left:6px;top:341px;width:40px;height:20px;background:#c0c0c0;border-top:1px solid #fff;border-left:1px solid #fff;border-bottom:1px solid #a0a0a0;border-right:1px solid #a0a0a0;overflow:hidden"></div><div style="left:46px;top:341px;width:75px;height:20px;border-bottom:1px solid #e0e0e0;border-right:1px solid #e0e0e0"></div><div class="t" style="left:46px;top:347px;width:74px;text-align:center;line-height:13px">7</div><div style="left:121px;top:341px;width:150px;height:20px;border-bottom:1px solid #e0e0e0;overflow:hidden"><div class="t" style="left:3px;top:6px;line-height:13px">Water in the tank</div></div><div style="left:271px;top:341px;width:75px;height:20px;border-bottom:1px solid #e0e0e0;border-right:1px solid #e0e0e0"></div><div class="t" style="left:271px;top:347px;width:74px;text-align:center;line-height:13px;letter-spacing:0.7px;padding-left:1px;color:#000">0.</div><div style="left:346px;top:341px;width:75px;height:20px;border-bottom:1px solid #e0e0e0;border-right:1px solid #e0e0e0"></div><div class="t" style="left:346px;top:347px;width:74px;text-align:center;line-height:13px;letter-spacing:0.7px;padding-left:1px;color:#000">0.7</div><div style="left:421px;top:341px;width:75px;height:20px;border-bottom:1px solid #e0e0e0;border-right:1px solid #e0e0e0"></div><div class="t" style="left:421px;top:347px;width:74px;text-align:center;line-height:13px;letter-spacing:0.7px;padding-left:1px;color:#000">0.7</div><div style="left:496px;top:341px;width:75px;height:20px;border-bottom:1px solid #e0e0e0;border-right:1px solid #e0e0e0"></div><div class="t" style="left:496px;top:347px;width:74px;text-align:center;line-height:13px;letter-spacing:0.7px;padding-left:1px;color:#000">0.7</div><div style="left:571px;top:341px;width:75px;height:20px;border-bottom:1px solid #e0e0e0;border-right:1px solid #e0e0e0"></div><div class="t" style="left:571px;top:347px;width:74px;text-align:center;line-height:13px;letter-spacing:0.7px;padding-left:1px;color:#000">0.</div><div style="left:646px;top:341px;width:75px;height:20px;border-bottom:1px solid #e0e0e0;border-right:1px solid #e0e0e0"></div><div class="t" style="left:646px;top:347px;width:74px;text-align:center;line-height:13px;letter-spacing:0.7px;padding-left:1px;color:#000">0.7</div><div style="left:721px;top:341px;width:75px;height:20px;border-bottom:1px solid #e0e0e0;border-right:1px solid #e0e0e0"></div><div class="t" style="left:721px;top:347px;width:74px;text-align:center;line-height:13px;letter-spacing:0.7px;padding-left:1px;color:#000">0.7</div><div style="left:796px;top:341px;width:75px;height:20px;background:#0078d7;border-bottom:1px solid #e0e0e0;border-right:1px solid #e0e0e0"></div><div class="t" style="left:796px;top:347px;width:74px;text-align:center;line-height:13px;letter-spacing:0.7px;padding-left:1px;color:#fff">0.7</div><div style="left:871px;top:341px;width:75px;height:20px;border-bottom:1px solid #e0e0e0;border-right:1px solid #e0e0e0"></div><div class="t" style="left:871px;top:347px;width:74px;text-align:center;line-height:13px;letter-spacing:0.7px;padding-left:1px;color:#000">0.3</div><div style="left:946px;top:341px;width:75px;height:20px;border-bottom:1px solid #e0e0e0;border-right:1px solid #e0e0e0"></div><div class="t" style="left:946px;top:347px;width:74px;text-align:center;line-height:13px;letter-spacing:0.7px;padding-left:1px;color:#000">0.3</div><div style="left:6px;top:361px;width:40px;height:20px;background:#c0c0c0;border-top:1px solid #fff;border-left:1px solid #fff;border-bottom:1px solid #a0a0a0;border-right:1px solid #a0a0a0;overflow:hidden"></div><div style="left:46px;top:361px;width:75px;height:20px;border-bottom:1px solid #e0e0e0;border-right:1px solid #e0e0e0"></div><div class="t" style="left:46px;top:367px;width:74px;text-align:center;line-height:13px">8</div><div style="left:121px;top:361px;width:150px;height:20px;border-bottom:1px solid #e0e0e0;overflow:hidden"><div class="t" style="left:3px;top:6px;line-height:13px">Short-term loads</div></div><div style="left:271px;top:361px;width:75px;height:20px;border-bottom:1px solid #e0e0e0;border-right:1px solid #e0e0e0"></div><div class="t" style="left:271px;top:367px;width:74px;text-align:center;line-height:13px;letter-spacing:0.7px;padding-left:1px;color:#000">0.</div><div style="left:346px;top:361px;width:75px;height:20px;border-bottom:1px solid #e0e0e0;border-right:1px solid #e0e0e0"></div><div class="t" style="left:346px;top:367px;width:74px;text-align:center;line-height:13px;letter-spacing:0.7px;padding-left:1px;color:#000">0.7</div><div style="left:421px;top:361px;width:75px;height:20px;border-bottom:1px solid #e0e0e0;border-right:1px solid #e0e0e0"></div><div class="t" style="left:421px;top:367px;width:74px;text-align:center;line-height:13px;letter-spacing:0.7px;padding-left:1px;color:#000">0.7</div><div style="left:496px;top:361px;width:75px;height:20px;border-bottom:1px solid #e0e0e0;border-right:1px solid #e0e0e0"></div><div class="t" style="left:496px;top:367px;width:74px;text-align:center;line-height:13px;letter-spacing:0.7px;padding-left:1px;color:#000">0.7</div><div style="left:571px;top:361px;width:75px;height:20px;border-bottom:1px solid #e0e0e0;border-right:1px solid #e0e0e0"></div><div class="t" style="left:571px;top:367px;width:74px;text-align:center;line-height:13px;letter-spacing:0.7px;padding-left:1px;color:#000">0.</div><div style="left:646px;top:361px;width:75px;height:20px;border-bottom:1px solid #e0e0e0;border-right:1px solid #e0e0e0"></div><div class="t" style="left:646px;top:367px;width:74px;text-align:center;line-height:13px;letter-spacing:0.7px;padding-left:1px;color:#000">0.7</div><div style="left:721px;top:361px;width:75px;height:20px;border-bottom:1px solid #e0e0e0;border-right:1px solid #e0e0e0"></div><div class="t" style="left:721px;top:367px;width:74px;text-align:center;line-height:13px;letter-spacing:0.7px;padding-left:1px;color:#000">0.7</div><div style="left:796px;top:361px;width:75px;height:20px;background:#0078d7;border-bottom:1px solid #e0e0e0;border-right:1px solid #e0e0e0"></div><div class="t" style="left:796px;top:367px;width:74px;text-align:center;line-height:13px;letter-spacing:0.7px;padding-left:1px;color:#fff">0.7</div><div style="left:871px;top:361px;width:75px;height:20px;border-bottom:1px solid #e0e0e0;border-right:1px solid #e0e0e0"></div><div class="t" style="left:871px;top:367px;width:74px;text-align:center;line-height:13px;letter-spacing:0.7px;padding-left:1px;color:#000">0.3</div><div style="left:946px;top:361px;width:75px;height:20px;border-bottom:1px solid #e0e0e0;border-right:1px solid #e0e0e0"></div><div class="t" style="left:946px;top:367px;width:74px;text-align:center;line-height:13px;letter-spacing:0.7px;padding-left:1px;color:#000">0.3</div><div style="left:6px;top:381px;width:40px;height:20px;background:#c0c0c0;border-top:1px solid #fff;border-left:1px solid #fff;border-bottom:1px solid #a0a0a0;border-right:1px solid #a0a0a0;overflow:hidden"></div><div style="left:46px;top:381px;width:75px;height:20px;border-bottom:1px solid #e0e0e0;border-right:1px solid #e0e0e0"></div><div class="t" style="left:46px;top:387px;width:74px;text-align:center;line-height:13px">9</div><div style="left:121px;top:381px;width:150px;height:20px;border-bottom:1px solid #e0e0e0;overflow:hidden"><div class="t" style="left:3px;top:6px;line-height:13px">Active pressure on the basement</div></div><div style="left:271px;top:381px;width:75px;height:20px;border-bottom:1px solid #e0e0e0;border-right:1px solid #e0e0e0"></div><div class="t" style="left:271px;top:387px;width:74px;text-align:center;line-height:13px;letter-spacing:0.7px;padding-left:1px;color:#000">0.</div><div style="left:346px;top:381px;width:75px;height:20px;border-bottom:1px solid #e0e0e0;border-right:1px solid #e0e0e0"></div><div class="t" style="left:346px;top:387px;width:74px;text-align:center;line-height:13px;letter-spacing:0.7px;padding-left:1px;color:#000">0.7</div><div style="left:421px;top:381px;width:75px;height:20px;border-bottom:1px solid #e0e0e0;border-right:1px solid #e0e0e0"></div><div class="t" style="left:421px;top:387px;width:74px;text-align:center;line-height:13px;letter-spacing:0.7px;padding-left:1px;color:#000">0.7</div><div style="left:496px;top:381px;width:75px;height:20px;border-bottom:1px solid #e0e0e0;border-right:1px solid #e0e0e0"></div><div class="t" style="left:496px;top:387px;width:74px;text-align:center;line-height:13px;letter-spacing:0.7px;padding-left:1px;color:#000">0.7</div><div style="left:571px;top:381px;width:75px;height:20px;border-bottom:1px solid #e0e0e0;border-right:1px solid #e0e0e0"></div><div class="t" style="left:571px;top:387px;width:74px;text-align:center;line-height:13px;letter-spacing:0.7px;padding-left:1px;color:#000">0.</div><div style="left:646px;top:381px;width:75px;height:20px;border-bottom:1px solid #e0e0e0;border-right:1px solid #e0e0e0"></div><div class="t" style="left:646px;top:387px;width:74px;text-align:center;line-height:13px;letter-spacing:0.7px;padding-left:1px;color:#000">0.7</div><div style="left:721px;top:381px;width:75px;height:20px;border-bottom:1px solid #e0e0e0;border-right:1px solid #e0e0e0"></div><div class="t" style="left:721px;top:387px;width:74px;text-align:center;line-height:13px;letter-spacing:0.7px;padding-left:1px;color:#000">0.7</div><div style="left:796px;top:381px;width:75px;height:20px;background:#0078d7;border-bottom:1px solid #e0e0e0;border-right:1px solid #e0e0e0"></div><div class="t" style="left:796px;top:387px;width:74px;text-align:center;line-height:13px;letter-spacing:0.7px;padding-left:1px;color:#fff">0.7</div><div style="left:871px;top:381px;width:75px;height:20px;border-bottom:1px solid #e0e0e0;border-right:1px solid #e0e0e0"></div><div class="t" style="left:871px;top:387px;width:74px;text-align:center;line-height:13px;letter-spacing:0.7px;padding-left:1px;color:#000">0.3</div><div style="left:946px;top:381px;width:75px;height:20px;border-bottom:1px solid #e0e0e0;border-right:1px solid #e0e0e0"></div><div class="t" style="left:946px;top:387px;width:74px;text-align:center;line-height:13px;letter-spacing:0.7px;padding-left:1px;color:#000">0.3</div><div style="left:6px;top:401px;width:40px;height:20px;background:#c0c0c0;border-top:1px solid #fff;border-left:1px solid #fff;border-bottom:1px solid #a0a0a0;border-right:1px solid #a0a0a0;overflow:hidden"></div><div style="left:46px;top:401px;width:75px;height:20px;border-bottom:1px solid #e0e0e0;border-right:1px solid #e0e0e0"></div><div class="t" style="left:46px;top:407px;width:74px;text-align:center;line-height:13px">10</div><div style="left:121px;top:401px;width:150px;height:20px;border-bottom:1px solid #e0e0e0;overflow:hidden"><div class="t" style="left:3px;top:6px;line-height:13px">Snow</div></div><div style="left:271px;top:401px;width:75px;height:20px;border-bottom:1px solid #e0e0e0;border-right:1px solid #e0e0e0"></div><div class="t" style="left:271px;top:407px;width:74px;text-align:center;line-height:13px;letter-spacing:0.7px;padding-left:1px;color:#000">0.</div><div style="left:346px;top:401px;width:75px;height:20px;border-bottom:1px solid #e0e0e0;border-right:1px solid #e0e0e0"></div><div class="t" style="left:346px;top:407px;width:74px;text-align:center;line-height:13px;letter-spacing:0.7px;padding-left:1px;color:#000">0.7</div><div style="left:421px;top:401px;width:75px;height:20px;border-bottom:1px solid #e0e0e0;border-right:1px solid #e0e0e0"></div><div class="t" style="left:421px;top:407px;width:74px;text-align:center;line-height:13px;letter-spacing:0.7px;padding-left:1px;color:#000">0.7</div><div style="left:496px;top:401px;width:75px;height:20px;border-bottom:1px solid #e0e0e0;border-right:1px solid #e0e0e0"></div><div class="t" style="left:496px;top:407px;width:74px;text-align:center;line-height:13px;letter-spacing:0.7px;padding-left:1px;color:#000">0.7</div><div style="left:571px;top:401px;width:75px;height:20px;border-bottom:1px solid #e0e0e0;border-right:1px solid #e0e0e0"></div><div class="t" style="left:571px;top:407px;width:74px;text-align:center;line-height:13px;letter-spacing:0.7px;padding-left:1px;color:#000">0.</div><div style="left:646px;top:401px;width:75px;height:20px;border-bottom:1px solid #e0e0e0;border-right:1px solid #e0e0e0"></div><div class="t" style="left:646px;top:407px;width:74px;text-align:center;line-height:13px;letter-spacing:0.7px;padding-left:1px;color:#000">0.7</div><div style="left:721px;top:401px;width:75px;height:20px;border-bottom:1px solid #e0e0e0;border-right:1px solid #e0e0e0"></div><div class="t" style="left:721px;top:407px;width:74px;text-align:center;line-height:13px;letter-spacing:0.7px;padding-left:1px;color:#000">0.7</div><div style="left:796px;top:401px;width:75px;height:20px;background:#0078d7;border-bottom:1px solid #e0e0e0;border-right:1px solid #e0e0e0"></div><div class="t" style="left:796px;top:407px;width:74px;text-align:center;line-height:13px;letter-spacing:0.7px;padding-left:1px;color:#fff">0.7</div><div style="left:871px;top:401px;width:75px;height:20px;border-bottom:1px solid #e0e0e0;border-right:1px solid #e0e0e0"></div><div class="t" style="left:871px;top:407px;width:74px;text-align:center;line-height:13px;letter-spacing:0.7px;padding-left:1px;color:#000">0.3</div><div style="left:946px;top:401px;width:75px;height:20px;border-bottom:1px solid #e0e0e0;border-right:1px solid #e0e0e0"></div><div class="t" style="left:946px;top:407px;width:74px;text-align:center;line-height:13px;letter-spacing:0.7px;padding-left:1px;color:#000">0.3</div><div style="left:6px;top:421px;width:40px;height:20px;background:#c0c0c0;border-top:1px solid #fff;border-left:1px solid #fff;border-bottom:1px solid #a0a0a0;border-right:1px solid #a0a0a0;overflow:hidden"></div><div style="left:46px;top:421px;width:75px;height:20px;border-bottom:1px solid #e0e0e0;border-right:1px solid #e0e0e0"></div><div class="t" style="left:46px;top:427px;width:74px;text-align:center;line-height:13px">11</div><div style="left:121px;top:421px;width:150px;height:20px;border-bottom:1px solid #e0e0e0;overflow:hidden"><div class="t" style="left:3px;top:6px;line-height:13px">Wind X</div></div><div style="left:271px;top:421px;width:75px;height:20px;border-bottom:1px solid #e0e0e0;border-right:1px solid #e0e0e0"></div><div class="t" style="left:271px;top:427px;width:74px;text-align:center;line-height:13px;letter-spacing:0.7px;padding-left:1px;color:#000">0.</div><div style="left:346px;top:421px;width:75px;height:20px;border-bottom:1px solid #e0e0e0;border-right:1px solid #e0e0e0"></div><div class="t" style="left:346px;top:427px;width:74px;text-align:center;line-height:13px;letter-spacing:0.7px;padding-left:1px;color:#000">0.6</div><div style="left:421px;top:421px;width:75px;height:20px;border-bottom:1px solid #e0e0e0;border-right:1px solid #e0e0e0"></div><div class="t" style="left:421px;top:427px;width:74px;text-align:center;line-height:13px;letter-spacing:0.7px;padding-left:1px;color:#000">0.6</div><div style="left:496px;top:421px;width:75px;height:20px;border-bottom:1px solid #e0e0e0;border-right:1px solid #e0e0e0"></div><div class="t" style="left:496px;top:427px;width:74px;text-align:center;line-height:13px;letter-spacing:0.7px;padding-left:1px;color:#000">0.6</div><div style="left:571px;top:421px;width:75px;height:20px;border-bottom:1px solid #e0e0e0;border-right:1px solid #e0e0e0"></div><div class="t" style="left:571px;top:427px;width:74px;text-align:center;line-height:13px;letter-spacing:0.7px;padding-left:1px;color:#000">0.</div><div style="left:646px;top:421px;width:75px;height:20px;border-bottom:1px solid #e0e0e0;border-right:1px solid #e0e0e0"></div><div class="t" style="left:646px;top:427px;width:74px;text-align:center;line-height:13px;letter-spacing:0.7px;padding-left:1px;color:#000">0.5</div><div style="left:721px;top:421px;width:75px;height:20px;border-bottom:1px solid #e0e0e0;border-right:1px solid #e0e0e0"></div><div class="t" style="left:721px;top:427px;width:74px;text-align:center;line-height:13px;letter-spacing:0.7px;padding-left:1px;color:#000">0.</div><div style="left:796px;top:421px;width:75px;height:20px;background:#0078d7;border-bottom:1px solid #e0e0e0;border-right:1px solid #e0e0e0"></div><div class="t" style="left:796px;top:427px;width:74px;text-align:center;line-height:13px;letter-spacing:0.7px;padding-left:1px;color:#fff">0.</div><div style="left:871px;top:421px;width:75px;height:20px;border-bottom:1px solid #e0e0e0;border-right:1px solid #e0e0e0"></div><div class="t" style="left:871px;top:427px;width:74px;text-align:center;line-height:13px;letter-spacing:0.7px;padding-left:1px;color:#000">0.</div><div style="left:946px;top:421px;width:75px;height:20px;border-bottom:1px solid #e0e0e0;border-right:1px solid #e0e0e0"></div><div class="t" style="left:946px;top:427px;width:74px;text-align:center;line-height:13px;letter-spacing:0.7px;padding-left:1px;color:#000">0.</div><div style="left:6px;top:441px;width:40px;height:20px;background:#c0c0c0;border-top:1px solid #fff;border-left:1px solid #fff;border-bottom:1px solid #a0a0a0;border-right:1px solid #a0a0a0;overflow:hidden"></div><div style="left:46px;top:441px;width:75px;height:20px;border-bottom:1px solid #e0e0e0;border-right:1px solid #e0e0e0"></div><div class="t" style="left:46px;top:447px;width:74px;text-align:center;line-height:13px">12</div><div style="left:121px;top:441px;width:150px;height:20px;border-bottom:1px solid #e0e0e0;overflow:hidden"><div class="t" style="left:3px;top:6px;line-height:13px">Wind Y</div></div><div style="left:271px;top:441px;width:75px;height:20px;border-bottom:1px solid #e0e0e0;border-right:1px solid #e0e0e0"></div><div class="t" style="left:271px;top:447px;width:74px;text-align:center;line-height:13px;letter-spacing:0.7px;padding-left:1px;color:#000">0.</div><div style="left:346px;top:441px;width:75px;height:20px;border-bottom:1px solid #e0e0e0;border-right:1px solid #e0e0e0"></div><div class="t" style="left:346px;top:447px;width:74px;text-align:center;line-height:13px;letter-spacing:0.7px;padding-left:1px;color:#000">0.</div><div style="left:421px;top:441px;width:75px;height:20px;border-bottom:1px solid #e0e0e0;border-right:1px solid #e0e0e0"></div><div class="t" style="left:421px;top:447px;width:74px;text-align:center;line-height:13px;letter-spacing:0.7px;padding-left:1px;color:#000">0.</div><div style="left:496px;top:441px;width:75px;height:20px;border-bottom:1px solid #e0e0e0;border-right:1px solid #e0e0e0"></div><div class="t" style="left:496px;top:447px;width:74px;text-align:center;line-height:13px;letter-spacing:0.7px;padding-left:1px;color:#000">0.</div><div style="left:571px;top:441px;width:75px;height:20px;border-bottom:1px solid #e0e0e0;border-right:1px solid #e0e0e0"></div><div class="t" style="left:571px;top:447px;width:74px;text-align:center;line-height:13px;letter-spacing:0.7px;padding-left:1px;color:#000">0.</div><div style="left:646px;top:441px;width:75px;height:20px;border-bottom:1px solid #e0e0e0;border-right:1px solid #e0e0e0"></div><div class="t" style="left:646px;top:447px;width:74px;text-align:center;line-height:13px;letter-spacing:0.7px;padding-left:1px;color:#000">0.</div><div style="left:721px;top:441px;width:75px;height:20px;border-bottom:1px solid #e0e0e0;border-right:1px solid #e0e0e0"></div><div class="t" style="left:721px;top:447px;width:74px;text-align:center;line-height:13px;letter-spacing:0.7px;padding-left:1px;color:#000">0.6</div><div style="left:796px;top:441px;width:75px;height:20px;background:#0078d7;border-bottom:1px solid #e0e0e0;border-right:1px solid #e0e0e0"></div><div class="t" style="left:796px;top:447px;width:74px;text-align:center;line-height:13px;letter-spacing:0.7px;padding-left:1px;color:#fff">0.</div><div style="left:871px;top:441px;width:75px;height:20px;border-bottom:1px solid #e0e0e0;border-right:1px solid #e0e0e0"></div><div class="t" style="left:871px;top:447px;width:74px;text-align:center;line-height:13px;letter-spacing:0.7px;padding-left:1px;color:#000">0.</div><div style="left:946px;top:441px;width:75px;height:20px;border-bottom:1px solid #e0e0e0;border-right:1px solid #e0e0e0"></div><div class="t" style="left:946px;top:447px;width:74px;text-align:center;line-height:13px;letter-spacing:0.7px;padding-left:1px;color:#000">0.</div><div style="left:6px;top:461px;width:40px;height:20px;background:#c0c0c0;border-top:1px solid #fff;border-left:1px solid #fff;border-bottom:1px solid #a0a0a0;border-right:1px solid #a0a0a0;overflow:hidden"></div><div style="left:46px;top:461px;width:75px;height:20px;border-bottom:1px solid #e0e0e0;border-right:1px solid #e0e0e0"></div><div class="t" style="left:46px;top:467px;width:74px;text-align:center;line-height:13px">13</div><div style="left:121px;top:461px;width:150px;height:20px;border-bottom:1px solid #e0e0e0;overflow:hidden"><div class="t" style="left:3px;top:6px;line-height:13px">Wind XY</div></div><div style="left:271px;top:461px;width:75px;height:20px;border-bottom:1px solid #e0e0e0;border-right:1px solid #e0e0e0"></div><div class="t" style="left:271px;top:467px;width:74px;text-align:center;line-height:13px;letter-spacing:0.7px;padding-left:1px;color:#000">0.</div><div style="left:346px;top:461px;width:75px;height:20px;border-bottom:1px solid #e0e0e0;border-right:1px solid #e0e0e0"></div><div class="t" style="left:346px;top:467px;width:74px;text-align:center;line-height:13px;letter-spacing:0.7px;padding-left:1px;color:#000">0.</div><div style="left:421px;top:461px;width:75px;height:20px;border-bottom:1px solid #e0e0e0;border-right:1px solid #e0e0e0"></div><div class="t" style="left:421px;top:467px;width:74px;text-align:center;line-height:13px;letter-spacing:0.7px;padding-left:1px;color:#000">0.</div><div style="left:496px;top:461px;width:75px;height:20px;border-bottom:1px solid #e0e0e0;border-right:1px solid #e0e0e0"></div><div class="t" style="left:496px;top:467px;width:74px;text-align:center;line-height:13px;letter-spacing:0.7px;padding-left:1px;color:#000">0.</div><div style="left:571px;top:461px;width:75px;height:20px;border-bottom:1px solid #e0e0e0;border-right:1px solid #e0e0e0"></div><div class="t" style="left:571px;top:467px;width:74px;text-align:center;line-height:13px;letter-spacing:0.7px;padding-left:1px;color:#000">0.</div><div style="left:646px;top:461px;width:75px;height:20px;border-bottom:1px solid #e0e0e0;border-right:1px solid #e0e0e0"></div><div class="t" style="left:646px;top:467px;width:74px;text-align:center;line-height:13px;letter-spacing:0.7px;padding-left:1px;color:#000">0.</div><div style="left:721px;top:461px;width:75px;height:20px;border-bottom:1px solid #e0e0e0;border-right:1px solid #e0e0e0"></div><div class="t" style="left:721px;top:467px;width:74px;text-align:center;line-height:13px;letter-spacing:0.7px;padding-left:1px;color:#000">0.</div><div style="left:796px;top:461px;width:75px;height:20px;background:#0078d7;border-bottom:1px solid #e0e0e0;border-right:1px solid #e0e0e0"></div><div class="t" style="left:796px;top:467px;width:74px;text-align:center;line-height:13px;letter-spacing:0.7px;padding-left:1px;color:#fff">0.6</div><div style="left:871px;top:461px;width:75px;height:20px;border-bottom:1px solid #e0e0e0;border-right:1px solid #e0e0e0"></div><div class="t" style="left:871px;top:467px;width:74px;text-align:center;line-height:13px;letter-spacing:0.7px;padding-left:1px;color:#000">0.</div><div style="left:946px;top:461px;width:75px;height:20px;border-bottom:1px solid #e0e0e0;border-right:1px solid #e0e0e0"></div><div class="t" style="left:946px;top:467px;width:74px;text-align:center;line-height:13px;letter-spacing:0.7px;padding-left:1px;color:#000">0.</div><div style="left:6px;top:481px;width:40px;height:20px;background:#c0c0c0;border-top:1px solid #fff;border-left:1px solid #fff;border-bottom:1px solid #a0a0a0;border-right:1px solid #a0a0a0;overflow:hidden"></div><div style="left:46px;top:481px;width:75px;height:20px;border-bottom:1px solid #e0e0e0;border-right:1px solid #e0e0e0"></div><div class="t" style="left:46px;top:487px;width:74px;text-align:center;line-height:13px">14</div><div style="left:121px;top:481px;width:150px;height:20px;border-bottom:1px solid #e0e0e0;overflow:hidden"><div class="t" style="left:3px;top:6px;line-height:13px">Masses for seismic</div></div><div style="left:271px;top:481px;width:75px;height:20px;border-bottom:1px solid #e0e0e0;border-right:1px solid #e0e0e0"></div><div class="t" style="left:271px;top:487px;width:74px;text-align:center;line-height:13px;letter-spacing:0.7px;padding-left:1px;color:#000">0.</div><div style="left:346px;top:481px;width:75px;height:20px;border-bottom:1px solid #e0e0e0;border-right:1px solid #e0e0e0"></div><div class="t" style="left:346px;top:487px;width:74px;text-align:center;line-height:13px;letter-spacing:0.7px;padding-left:1px;color:#000">0.</div><div style="left:421px;top:481px;width:75px;height:20px;border-bottom:1px solid #e0e0e0;border-right:1px solid #e0e0e0"></div><div class="t" style="left:421px;top:487px;width:74px;text-align:center;line-height:13px;letter-spacing:0.7px;padding-left:1px;color:#000">0.</div><div style="left:496px;top:481px;width:75px;height:20px;border-bottom:1px solid #e0e0e0;border-right:1px solid #e0e0e0"></div><div class="t" style="left:496px;top:487px;width:74px;text-align:center;line-height:13px;letter-spacing:0.7px;padding-left:1px;color:#000">0.</div><div style="left:571px;top:481px;width:75px;height:20px;border-bottom:1px solid #e0e0e0;border-right:1px solid #e0e0e0"></div><div class="t" style="left:571px;top:487px;width:74px;text-align:center;line-height:13px;letter-spacing:0.7px;padding-left:1px;color:#000">0.</div><div style="left:646px;top:481px;width:75px;height:20px;border-bottom:1px solid #e0e0e0;border-right:1px solid #e0e0e0"></div><div class="t" style="left:646px;top:487px;width:74px;text-align:center;line-height:13px;letter-spacing:0.7px;padding-left:1px;color:#000">0.</div><div style="left:721px;top:481px;width:75px;height:20px;border-bottom:1px solid #e0e0e0;border-right:1px solid #e0e0e0"></div><div class="t" style="left:721px;top:487px;width:74px;text-align:center;line-height:13px;letter-spacing:0.7px;padding-left:1px;color:#000">0.</div><div style="left:796px;top:481px;width:75px;height:20px;background:#0078d7;border-bottom:1px solid #e0e0e0;border-right:1px solid #e0e0e0"></div><div class="t" style="left:796px;top:487px;width:74px;text-align:center;line-height:13px;letter-spacing:0.7px;padding-left:1px;color:#fff">0.</div><div style="left:871px;top:481px;width:75px;height:20px;border-bottom:1px solid #e0e0e0;border-right:1px solid #e0e0e0"></div><div class="t" style="left:871px;top:487px;width:74px;text-align:center;line-height:13px;letter-spacing:0.7px;padding-left:1px;color:#000">0.</div><div style="left:946px;top:481px;width:75px;height:20px;border-bottom:1px solid #e0e0e0;border-right:1px solid #e0e0e0"></div><div class="t" style="left:946px;top:487px;width:74px;text-align:center;line-height:13px;letter-spacing:0.7px;padding-left:1px;color:#000">0.</div><div style="left:6px;top:501px;width:40px;height:20px;background:#c0c0c0;border-top:1px solid #fff;border-left:1px solid #fff;border-bottom:1px solid #a0a0a0;border-right:1px solid #a0a0a0;overflow:hidden"></div><div style="left:46px;top:501px;width:75px;height:20px;border-bottom:1px solid #e0e0e0;border-right:1px solid #e0e0e0"></div><div class="t" style="left:46px;top:507px;width:74px;text-align:center;line-height:13px">15</div><div style="left:121px;top:501px;width:150px;height:20px;border-bottom:1px solid #e0e0e0;overflow:hidden"><div class="t" style="left:3px;top:6px;line-height:13px">Earthquake - X</div></div><div style="left:271px;top:501px;width:75px;height:20px;border-bottom:1px solid #e0e0e0;border-right:1px solid #e0e0e0"></div><div class="t" style="left:271px;top:507px;width:74px;text-align:center;line-height:13px;letter-spacing:0.7px;padding-left:1px;color:#000">0.</div><div style="left:346px;top:501px;width:75px;height:20px;border-bottom:1px solid #e0e0e0;border-right:1px solid #e0e0e0"></div><div class="t" style="left:346px;top:507px;width:74px;text-align:center;line-height:13px;letter-spacing:0.7px;padding-left:1px;color:#000">0.</div><div style="left:421px;top:501px;width:75px;height:20px;border-bottom:1px solid #e0e0e0;border-right:1px solid #e0e0e0"></div><div class="t" style="left:421px;top:507px;width:74px;text-align:center;line-height:13px;letter-spacing:0.7px;padding-left:1px;color:#000">0.</div><div style="left:496px;top:501px;width:75px;height:20px;border-bottom:1px solid #e0e0e0;border-right:1px solid #e0e0e0"></div><div class="t" style="left:496px;top:507px;width:74px;text-align:center;line-height:13px;letter-spacing:0.7px;padding-left:1px;color:#000">0.</div><div style="left:571px;top:501px;width:75px;height:20px;border-bottom:1px solid #e0e0e0;border-right:1px solid #e0e0e0"></div><div class="t" style="left:571px;top:507px;width:74px;text-align:center;line-height:13px;letter-spacing:0.7px;padding-left:1px;color:#000">1.</div><div style="left:646px;top:501px;width:75px;height:20px;border-bottom:1px solid #e0e0e0;border-right:1px solid #e0e0e0"></div><div class="t" style="left:646px;top:507px;width:74px;text-align:center;line-height:13px;letter-spacing:0.7px;padding-left:1px;color:#000">0.</div><div style="left:721px;top:501px;width:75px;height:20px;border-bottom:1px solid #e0e0e0;border-right:1px solid #e0e0e0"></div><div class="t" style="left:721px;top:507px;width:74px;text-align:center;line-height:13px;letter-spacing:0.7px;padding-left:1px;color:#000">0.</div><div style="left:796px;top:501px;width:75px;height:20px;background:#0078d7;border-bottom:1px solid #e0e0e0;border-right:1px solid #e0e0e0"></div><div class="t" style="left:796px;top:507px;width:74px;text-align:center;line-height:13px;letter-spacing:0.7px;padding-left:1px;color:#fff">0.</div><div style="left:871px;top:501px;width:75px;height:20px;border-bottom:1px solid #e0e0e0;border-right:1px solid #e0e0e0"></div><div class="t" style="left:871px;top:507px;width:74px;text-align:center;line-height:13px;letter-spacing:0.7px;padding-left:1px;color:#000">0.</div><div style="left:946px;top:501px;width:75px;height:20px;border-bottom:1px solid #e0e0e0;border-right:1px solid #e0e0e0"></div><div class="t" style="left:946px;top:507px;width:74px;text-align:center;line-height:13px;letter-spacing:0.7px;padding-left:1px;color:#000">0.</div><div style="left:6px;top:521px;width:40px;height:20px;background:#c0c0c0;border-top:1px solid #fff;border-left:1px solid #fff;border-bottom:1px solid #a0a0a0;border-right:1px solid #a0a0a0;overflow:hidden"></div><div style="left:46px;top:521px;width:75px;height:20px;border-bottom:1px solid #e0e0e0;border-right:1px solid #e0e0e0"></div><div class="t" style="left:46px;top:527px;width:74px;text-align:center;line-height:13px">16</div><div style="left:121px;top:521px;width:150px;height:20px;border-bottom:1px solid #e0e0e0;overflow:hidden"><div class="t" style="left:3px;top:6px;line-height:13px">Earthquake - Y</div></div><div style="left:271px;top:521px;width:75px;height:20px;border-bottom:1px solid #e0e0e0;border-right:1px solid #e0e0e0"></div><div class="t" style="left:271px;top:527px;width:74px;text-align:center;line-height:13px;letter-spacing:0.7px;padding-left:1px;color:#000">0.</div><div style="left:346px;top:521px;width:75px;height:20px;border-bottom:1px solid #e0e0e0;border-right:1px solid #e0e0e0"></div><div class="t" style="left:346px;top:527px;width:74px;text-align:center;line-height:13px;letter-spacing:0.7px;padding-left:1px;color:#000">0.</div><div style="left:421px;top:521px;width:75px;height:20px;border-bottom:1px solid #e0e0e0;border-right:1px solid #e0e0e0"></div><div class="t" style="left:421px;top:527px;width:74px;text-align:center;line-height:13px;letter-spacing:0.7px;padding-left:1px;color:#000">0.</div><div style="left:496px;top:521px;width:75px;height:20px;border-bottom:1px solid #e0e0e0;border-right:1px solid #e0e0e0"></div><div class="t" style="left:496px;top:527px;width:74px;text-align:center;line-height:13px;letter-spacing:0.7px;padding-left:1px;color:#000">0.</div><div style="left:571px;top:521px;width:75px;height:20px;border-bottom:1px solid #e0e0e0;border-right:1px solid #e0e0e0"></div><div class="t" style="left:571px;top:527px;width:74px;text-align:center;line-height:13px;letter-spacing:0.7px;padding-left:1px;color:#000">1.</div><div style="left:646px;top:521px;width:75px;height:20px;border-bottom:1px solid #e0e0e0;border-right:1px solid #e0e0e0"></div><div class="t" style="left:646px;top:527px;width:74px;text-align:center;line-height:13px;letter-spacing:0.7px;padding-left:1px;color:#000">0.</div><div style="left:721px;top:521px;width:75px;height:20px;border-bottom:1px solid #e0e0e0;border-right:1px solid #e0e0e0"></div><div class="t" style="left:721px;top:527px;width:74px;text-align:center;line-height:13px;letter-spacing:0.7px;padding-left:1px;color:#000">0.</div><div style="left:796px;top:521px;width:75px;height:20px;background:#0078d7;border-bottom:1px solid #e0e0e0;border-right:1px solid #e0e0e0"></div><div class="t" style="left:796px;top:527px;width:74px;text-align:center;line-height:13px;letter-spacing:0.7px;padding-left:1px;color:#fff">0.</div><div style="left:871px;top:521px;width:75px;height:20px;border-bottom:1px solid #e0e0e0;border-right:1px solid #e0e0e0"></div><div class="t" style="left:871px;top:527px;width:74px;text-align:center;line-height:13px;letter-spacing:0.7px;padding-left:1px;color:#000">0.</div><div style="left:946px;top:521px;width:75px;height:20px;border-bottom:1px solid #e0e0e0;border-right:1px solid #e0e0e0"></div><div class="t" style="left:946px;top:527px;width:74px;text-align:center;line-height:13px;letter-spacing:0.7px;padding-left:1px;color:#000">0.</div><div style="left:6px;top:541px;width:40px;height:20px;background:#c0c0c0;border-top:1px solid #fff;border-left:1px solid #fff;border-bottom:1px solid #a0a0a0;border-right:1px solid #a0a0a0;overflow:hidden"></div><div style="left:46px;top:541px;width:75px;height:20px;border-bottom:1px solid #e0e0e0;border-right:1px solid #e0e0e0"></div><div class="t" style="left:46px;top:547px;width:74px;text-align:center;line-height:13px">17</div><div style="left:121px;top:541px;width:150px;height:20px;border-bottom:1px solid #e0e0e0;overflow:hidden"><div class="t" style="left:3px;top:6px;line-height:13px">Earthquake - XY</div></div><div style="left:271px;top:541px;width:75px;height:20px;border-bottom:1px solid #e0e0e0;border-right:1px solid #e0e0e0"></div><div class="t" style="left:271px;top:547px;width:74px;text-align:center;line-height:13px;letter-spacing:0.7px;padding-left:1px;color:#000">0.</div><div style="left:346px;top:541px;width:75px;height:20px;border-bottom:1px solid #e0e0e0;border-right:1px solid #e0e0e0"></div><div class="t" style="left:346px;top:547px;width:74px;text-align:center;line-height:13px;letter-spacing:0.7px;padding-left:1px;color:#000">0.</div><div style="left:421px;top:541px;width:75px;height:20px;border-bottom:1px solid #e0e0e0;border-right:1px solid #e0e0e0"></div><div class="t" style="left:421px;top:547px;width:74px;text-align:center;line-height:13px;letter-spacing:0.7px;padding-left:1px;color:#000">0.</div><div style="left:496px;top:541px;width:75px;height:20px;border-bottom:1px solid #e0e0e0;border-right:1px solid #e0e0e0"></div><div class="t" style="left:496px;top:547px;width:74px;text-align:center;line-height:13px;letter-spacing:0.7px;padding-left:1px;color:#000">0.</div><div style="left:571px;top:541px;width:75px;height:20px;border-bottom:1px solid #e0e0e0;border-right:1px solid #e0e0e0"></div><div class="t" style="left:571px;top:547px;width:74px;text-align:center;line-height:13px;letter-spacing:0.7px;padding-left:1px;color:#000">1.</div><div style="left:646px;top:541px;width:75px;height:20px;border-bottom:1px solid #e0e0e0;border-right:1px solid #e0e0e0"></div><div class="t" style="left:646px;top:547px;width:74px;text-align:center;line-height:13px;letter-spacing:0.7px;padding-left:1px;color:#000">0.</div><div style="left:721px;top:541px;width:75px;height:20px;border-bottom:1px solid #e0e0e0;border-right:1px solid #e0e0e0"></div><div class="t" style="left:721px;top:547px;width:74px;text-align:center;line-height:13px;letter-spacing:0.7px;padding-left:1px;color:#000">0.</div><div style="left:796px;top:541px;width:75px;height:20px;background:#0078d7;border-bottom:1px solid #e0e0e0;border-right:1px solid #e0e0e0"></div><div class="t" style="left:796px;top:547px;width:74px;text-align:center;line-height:13px;letter-spacing:0.7px;padding-left:1px;color:#fff">0.</div><div style="left:871px;top:541px;width:75px;height:20px;border-bottom:1px solid #e0e0e0;border-right:1px solid #e0e0e0"></div><div class="t" style="left:871px;top:547px;width:74px;text-align:center;line-height:13px;letter-spacing:0.7px;padding-left:1px;color:#000">0.</div><div style="left:946px;top:541px;width:75px;height:20px;border-bottom:1px solid #e0e0e0;border-right:1px solid #e0e0e0"></div><div class="t" style="left:946px;top:547px;width:74px;text-align:center;line-height:13px;letter-spacing:0.7px;padding-left:1px;color:#000">0.</div><div style="left:270px;top:201px;width:1px;height:360px;background:#000"></div><div style="left:6px;top:561px;width:1049px;height:18px;background:#f0f0f0;border-top:3px solid #fff"></div><div style="left:361px;top:564px;width:677px;height:14px;background:#cdcdcd"></div><svg style="left:11px;top:567px" width="6" height="8"><path d="M5.2 0.8L1.5 4L5.2 7.2" fill="none" stroke="#505050" stroke-width="1.9"/></svg><svg style="left:1042px;top:567px" width="6" height="8"><path d="M0.8 0.8L4.5 4L0.8 7.2" fill="none" stroke="#505050" stroke-width="1.9"/></svg><div style="left:1059px;top:161px;width:31px;height:24px;background:#e1e1e1;border:1px solid #adadad"></div><div style="left:1059px;top:191px;width:31px;height:24px;background:#e1e1e1;border:1px solid #adadad"></div><div style="left:1059px;top:220px;width:31px;height:24px;background:#e1e1e1;border:1px solid #adadad"></div><div style="left:1059px;top:254px;width:31px;height:24px;background:#e1e1e1;border:1px solid #adadad"></div><div style="left:1059px;top:290px;width:31px;height:24px;background:#e1e1e1;border:1px solid #adadad"></div><div style="left:1059px;top:321px;width:31px;height:24px;background:#e1e1e1;border:1px solid #adadad"></div><div style="left:1059px;top:352px;width:31px;height:24px;background:#e1e1e1;border:1px solid #adadad"></div><div style="left:1059px;top:378px;width:31px;height:24px;background:#e1e1e1;border:1px solid #adadad"></div><svg style="left:1066px;top:165px" width="16" height="16" viewBox="0 0 16 16"><defs><linearGradient id="pg1066165" x1="0" y1="0" x2="0" y2="1"><stop offset="0" stop-color="#7a6ab8"/><stop offset="1" stop-color="#2a1f5a"/></linearGradient></defs><path d="M6 1H10V6H15V10H10V15H6V10H1V6H6Z" fill="url(#pg1066165)"/></svg><svg style="left:1067px;top:194px" width="16" height="18" viewBox="0 0 16 18"><path d="M2 1L9.5 11M13 1L5.5 11" stroke="#555" stroke-width="1.1"/><g transform="rotate(-48 3.8 14.2)"><ellipse cx="3.8" cy="14.2" rx="3.6" ry="1.9" fill="#a8d8f0" stroke="#2a8ac0" stroke-width="1.3"/></g><g transform="rotate(48 11.8 14.2)"><ellipse cx="11.8" cy="14.2" rx="3.6" ry="1.9" fill="#a8d8f0" stroke="#2a8ac0" stroke-width="1.3"/></g></svg><svg style="left:1066px;top:224px" width="18" height="17" viewBox="0 0 18 17"><rect x="0.5" y="0.5" width="15" height="12" fill="#f4f4fa" stroke="#7a70b0"/><path d="M0.5 3.5H15.5M0.5 6.5H15.5M0.5 9.5H15.5M4.5 0.5V12.5M8.5 0.5V12.5M12.5 0.5V12.5" stroke="#9a90c8"/><path d="M0.5 3.5H8" stroke="#d04040"/><path d="M4.5 1V10" stroke="#d04040"/><path d="M5 2H10L7 6L10 10H5" fill="none" stroke="#202060" stroke-width="1.3"/><path d="M7 8L15 16M15 7L7 16" stroke="#c02020" stroke-width="2.4"/></svg><svg style="left:1066px;top:258px" width="17" height="17" viewBox="0 0 17 17"><path d="M1 0H6L7 1.5H15V2.5H1Z" fill="#5a5040"/><defs><linearGradient id="fdg" x1="0" y1="0" x2="0" y2="1"><stop offset="0" stop-color="#e0d0a0"/><stop offset="1" stop-color="#a89060"/></linearGradient></defs><path d="M0.5 2H15.5V12H0.5Z" fill="url(#fdg)"/><path d="M5.5 4.5H12.5L14.5 6.5V15.5H5.5Z" fill="#fff" stroke="#5a5090"/><path d="M7 10H13M7 12H13M7 14H13" stroke="#8a88b8"/><path d="M1 2L5.5 6.5" stroke="#101010" stroke-width="1.5"/><path d="M7 8.5L2.8 7.8L6.3 4.3Z" fill="#101010"/></svg><svg style="left:1067px;top:294px" width="15" height="15" viewBox="0 0 15 15"><path d="M0 0H15V15H0Z" fill="#1a1a1a"/><rect x="2" y="1" width="11" height="6" fill="#e8ecf4"/><rect x="3" y="9" width="9" height="5" fill="#d0d0d0"/><rect x="4" y="10" width="2" height="4" fill="#1a1a1a"/></svg><svg style="left:1065px;top:324px" width="19" height="17" viewBox="0 0 19 17"><path d="M3 4H15" stroke="#5a9a50" stroke-width="2.2"/><path d="M1 4L5 0.5V7.5Z" fill="#5a9a50"/><path d="M7 10H15" stroke="#c02020" stroke-width="2.2"/><path d="M6 10L9 7.5V12.5Z" fill="#c02020"/><path d="M8 14H15" stroke="#1a7a30" stroke-width="2.2"/><path d="M18 14L14 11V17Z" fill="#1a7a30"/><path d="M3 15L14 3" stroke="#e8c040" stroke-width="3"/><path d="M2 16L4 13" stroke="#604020" stroke-width="1.5"/><circle cx="14.5" cy="2.5" r="1.8" fill="#e08080"/></svg><svg style="left:1067px;top:357px" width="15" height="15" viewBox="0 0 15 15"><path d="M1 2L3 0.5L7.5 5.5L13 0.5L14.5 1.5L9.5 7.5L14.5 13.5L13 14.5L7.5 9.5L2 14.5L0.5 13L5.5 7.5Z" fill="#c8202a"/></svg><svg style="left:1069px;top:382px" width="11" height="15" viewBox="0 0 11 15"><path d="M1.5 4.5C1.5 2 3.5 1 5.5 1C8 1 9.5 2.3 9.5 4.3C9.5 6.5 6.5 7 6.2 9.5" fill="none" stroke="#3a7a20" stroke-width="2.2"/><path d="M1.5 4.8L3.6 4.8" stroke="#3a7a20" stroke-width="2.5"/><circle cx="6" cy="12.8" r="1.6" fill="#3a7a20"/></svg><div style="left:5px;top:585px;width:215px;height:115px;background:#fff;border:1px solid #828790"></div><div class="t" style="left:8px;top:588px;height:13px;line-height:13px;"><span style="font-family:'Liberation Serif';font-size:11.5px">I</span>. Fundamental combination (ULS)</div><div class="t" style="left:8px;top:601px;height:13px;line-height:13px;"><span style="font-family:'Liberation Serif';font-size:11.5px">I</span><span style="font-family:'Liberation Serif';font-size:11.5px">I</span>. Emergency combination (ULS)</div><div class="t" style="left:8px;top:614px;height:13px;line-height:13px;"><span style="font-family:'Liberation Serif';font-size:11.5px">I</span><span style="font-family:'Liberation Serif';font-size:11.5px">I</span><span style="font-family:'Liberation Serif';font-size:11.5px">I</span>. Earthquake combination (ULS)</div><div class="t" style="left:8px;top:627px;height:13px;line-height:13px;"><span style="font-family:'Liberation Serif';font-size:11.5px">I</span>V. Characteristic combination (SLS)</div><div class="t" style="left:8px;top:640px;height:13px;line-height:13px;">V. Frequent combination (SLS)</div><div style="left:7px;top:652px;width:211px;height:13px;background:#0078d7"></div><div class="t" style="left:8px;top:653px;height:13px;line-height:13px;color:#fff">V<span style="font-family:'Liberation Serif';font-size:11.5px">I</span>. Quasi-permanent combination (SLS)</div><div style="left:69px;top:708px;width:78px;height:21px;background:#e1e1e1;border:1px solid #adadad"></div><div class="t" style="left:69px;top:713px;width:78px;text-align:center;line-height:13px">Add</div><div style="left:225px;top:590px;width:250px;height:31px;background:#e8e8e8"></div><svg style="left:225px;top:588px" width="250" height="36" viewBox="0 0 250 36" font-family="Liberation Serif" fill="#2a2a2a">
<text x="5.5" y="19.5" font-size="21" transform="translate(5.5 0) scale(1.22 1) translate(-5.5 0)">&#8721;</text>
<text x="6" y="31.5" font-size="10">j &#8805;1</text>
<text x="22.5" y="18" font-size="15.5">G</text>
<text x="33" y="28" font-size="10.5">k, j</text>
<text x="50" y="18.5" font-size="16">+</text>
<text x="64" y="19.5" font-size="21" transform="translate(64 0) scale(1.22 1) translate(-64 0)">&#8721;</text>
<text x="65" y="31.5" font-size="10">i &gt;1</text>
<text x="82" y="19" font-size="15">&#968;</text>
<text x="91" y="26.5" font-size="10.5">2,i</text>
<text x="101" y="18.5" font-size="15">Q</text>
<text x="113" y="28" font-size="10.5">k, i</text>
<text x="135" y="21" font-size="12">(6.16b)</text>
</svg><div class="t" style="left:588px;top:598px;height:13px;line-height:13px;">Table</div><svg style="left:643px;top:598px" width="15" height="15"><circle cx="7" cy="7" r="6" fill="#fff" stroke="#333"/></svg><div class="t" style="left:660px;top:599px;height:13px;line-height:13px;">A</div><svg style="left:677px;top:598px" width="15" height="15"><circle cx="7" cy="7" r="6" fill="#fff" stroke="#333"/><circle cx="7" cy="7" r="3.5" fill="#333"/></svg><div class="t" style="left:694px;top:599px;height:13px;line-height:13px;">B</div><svg style="left:711px;top:598px" width="15" height="15"><circle cx="7" cy="7" r="6" fill="#fff" stroke="#333"/></svg><div class="t" style="left:729px;top:599px;height:13px;line-height:13px;">C</div><div style="left:486px;top:628px;width:13px;height:13px;background:#fff;border:1px solid #333"></div><div class="t" style="left:502px;top:629px;height:13px;line-height:13px;">Account of expression 4.29 Eurocode 8</div><svg style="left:224px;top:651px" width="15" height="15"><circle cx="7" cy="7" r="6" fill="#fff" stroke="#b0b0b0"/></svg><div class="t" style="left:241px;top:652px;height:13px;line-height:13px;color:#6d6d6d">f. 6.10</div><svg style="left:296px;top:651px" width="15" height="15"><circle cx="7" cy="7" r="6" fill="#fff" stroke="#b0b0b0"/></svg><div class="t" style="left:313px;top:652px;height:13px;line-height:13px;color:#6d6d6d">f. 6.10a</div><svg style="left:374px;top:651px" width="15" height="15"><circle cx="7" cy="7" r="6" fill="#fff" stroke="#b0b0b0"/></svg><div class="t" style="left:390px;top:652px;height:13px;line-height:13px;color:#6d6d6d">f. 6.10b</div><svg style="left:296px;top:676px" width="15" height="15"><circle cx="7" cy="7" r="6" fill="#fff" stroke="#b0b0b0"/><circle cx="7" cy="7" r="3.5" fill="#bcbcbc"/></svg><div class="t" style="left:313px;top:677px;height:13px;line-height:13px;color:#6d6d6d">modif. to NP2.2.3.2 of Dec 30, 21</div><div style="left:227px;top:700px;width:13px;height:13px;background:#fff;border:1px solid #333"></div><svg style="left:229px;top:703px" width="10" height="8"><path d="M0.5 3.5L3.5 6.5L9 0.8" fill="none" stroke="#000" stroke-width="1.2"/></svg><div class="t" style="left:243px;top:701px;height:13px;line-height:13px;">Combinations SUP</div><div style="left:227px;top:721px;width:13px;height:13px;background:#fff;border:1px solid #333"></div><svg style="left:229px;top:724px" width="10" height="8"><path d="M0.5 3.5L3.5 6.5L9 0.8" fill="none" stroke="#000" stroke-width="1.2"/></svg><div class="t" style="left:243px;top:722px;height:13px;line-height:13px;">Combinations <span style="font-family:'Liberation Serif';font-size:11.5px">I</span>NF</div><div style="left:371px;top:700px;width:13px;height:13px;background:#fff;border:1px solid #333"></div><div class="t" style="left:387px;top:701px;height:13px;line-height:13px;">G + W</div><div style="left:371px;top:721px;width:13px;height:13px;background:#fff;border:1px solid #333"></div><div class="t" style="left:387px;top:722px;height:13px;line-height:13px;">G + Sn</div><div style="left:227px;top:744px;width:13px;height:13px;background:#fff;border:1px solid #c8c8c8"></div><div class="t" style="left:243px;top:745px;height:13px;line-height:13px;color:#6d6d6d">Показать произведение всех коэффициентов Yf*psi</div><div style="left:576px;top:742px;width:85px;height:21px;background:#e1e1e1;border:1px solid #adadad"></div><div class="t" style="left:576px;top:747px;width:85px;text-align:center;line-height:13px">Coefficients</div><svg style="left:1082px;top:762px" width="13" height="13"><path d="M12.5 0.5L0.5 12.5M12.5 4.5L4.5 12.5M12.5 8.5L8.5 12.5" stroke="#fff" stroke-width="1" transform="translate(-1 0)"/><path d="M12.5 0.5L0.5 12.5M12.5 4.5L4.5 12.5M12.5 8.5L8.5 12.5" stroke="#7a7a7a" stroke-width="1.5"/></svg><div style="left:408px;top:283px;width:280px;height:211px;background:#f0f0f0;border:1px solid #6a6a6a;box-shadow:0 4px 14px rgba(0,0,0,0.28)"></div><div style="left:409px;top:284px;width:278px;height:30px;background:#fff"></div><div class="t" style="left:417px;top:292px;height:14px;line-height:14px;font-size:12px">Name of DCL</div><svg style="left:667px;top:293px" width="11" height="11"><path d="M0.5 0.5L10.5 10.5M10.5 0.5L0.5 10.5" stroke="#000" stroke-width="0.9"/></svg><div style="left:420px;top:329px;width:257px;height:23px;background:#ff8080;border:1px solid #7a7a7a"></div><div class="t" style="left:425px;top:334px;height:13px;line-height:13px;color:#800000">DCL10_<span style="font-family:'Liberation Serif';font-size:11.5px">I</span>V_6.14b_sup</div><div class="t" style="left:441px;top:372px;height:13px;line-height:13px;">To use combination for:</div><div style="left:421px;top:457px;width:73px;height:20px;background:#e1e1e1;border:2px solid #0078d7"></div><div class="t" style="left:421px;top:461px;width:73px;text-align:center;line-height:13px">OK</div><div style="left:602px;top:457px;width:73px;height:20px;background:#e1e1e1;border:1px solid #adadad"></div><div class="t" style="left:602px;top:461px;width:73px;text-align:center;line-height:13px">Cancel</div><div style="left:420px;top:395px;width:245px;height:21px;background:#e07880;border:1px solid #0078d7"></div><div class="t" style="left:424px;top:400px;height:13px;line-height:13px;color:#800000">all cases</div><svg style="left:650px;top:403px" width="10" height="6"><path d="M0.5 0.5L5 5L9.5 0.5" fill="none" stroke="#800000"/></svg><div style="left:420px;top:415px;width:245px;height:42px;background:#ff8080;border:1px solid #0078d7;border-top:none;box-shadow:2px 2px 3px rgba(0,0,0,0.35)"></div><div style="left:421px;top:415px;width:243px;height:15px;background:#7a3d6e"></div><div class="t" style="left:423px;top:418px;height:13px;line-height:13px;color:#ff8080">all cases</div><div class="t" style="left:422px;top:431px;height:13px;line-height:13px;color:#800000">analysis on crack propagation (RC)</div><div class="t" style="left:422px;top:444px;height:13px;line-height:13px;color:#800000">deflections (Steel)</div></body></html>
